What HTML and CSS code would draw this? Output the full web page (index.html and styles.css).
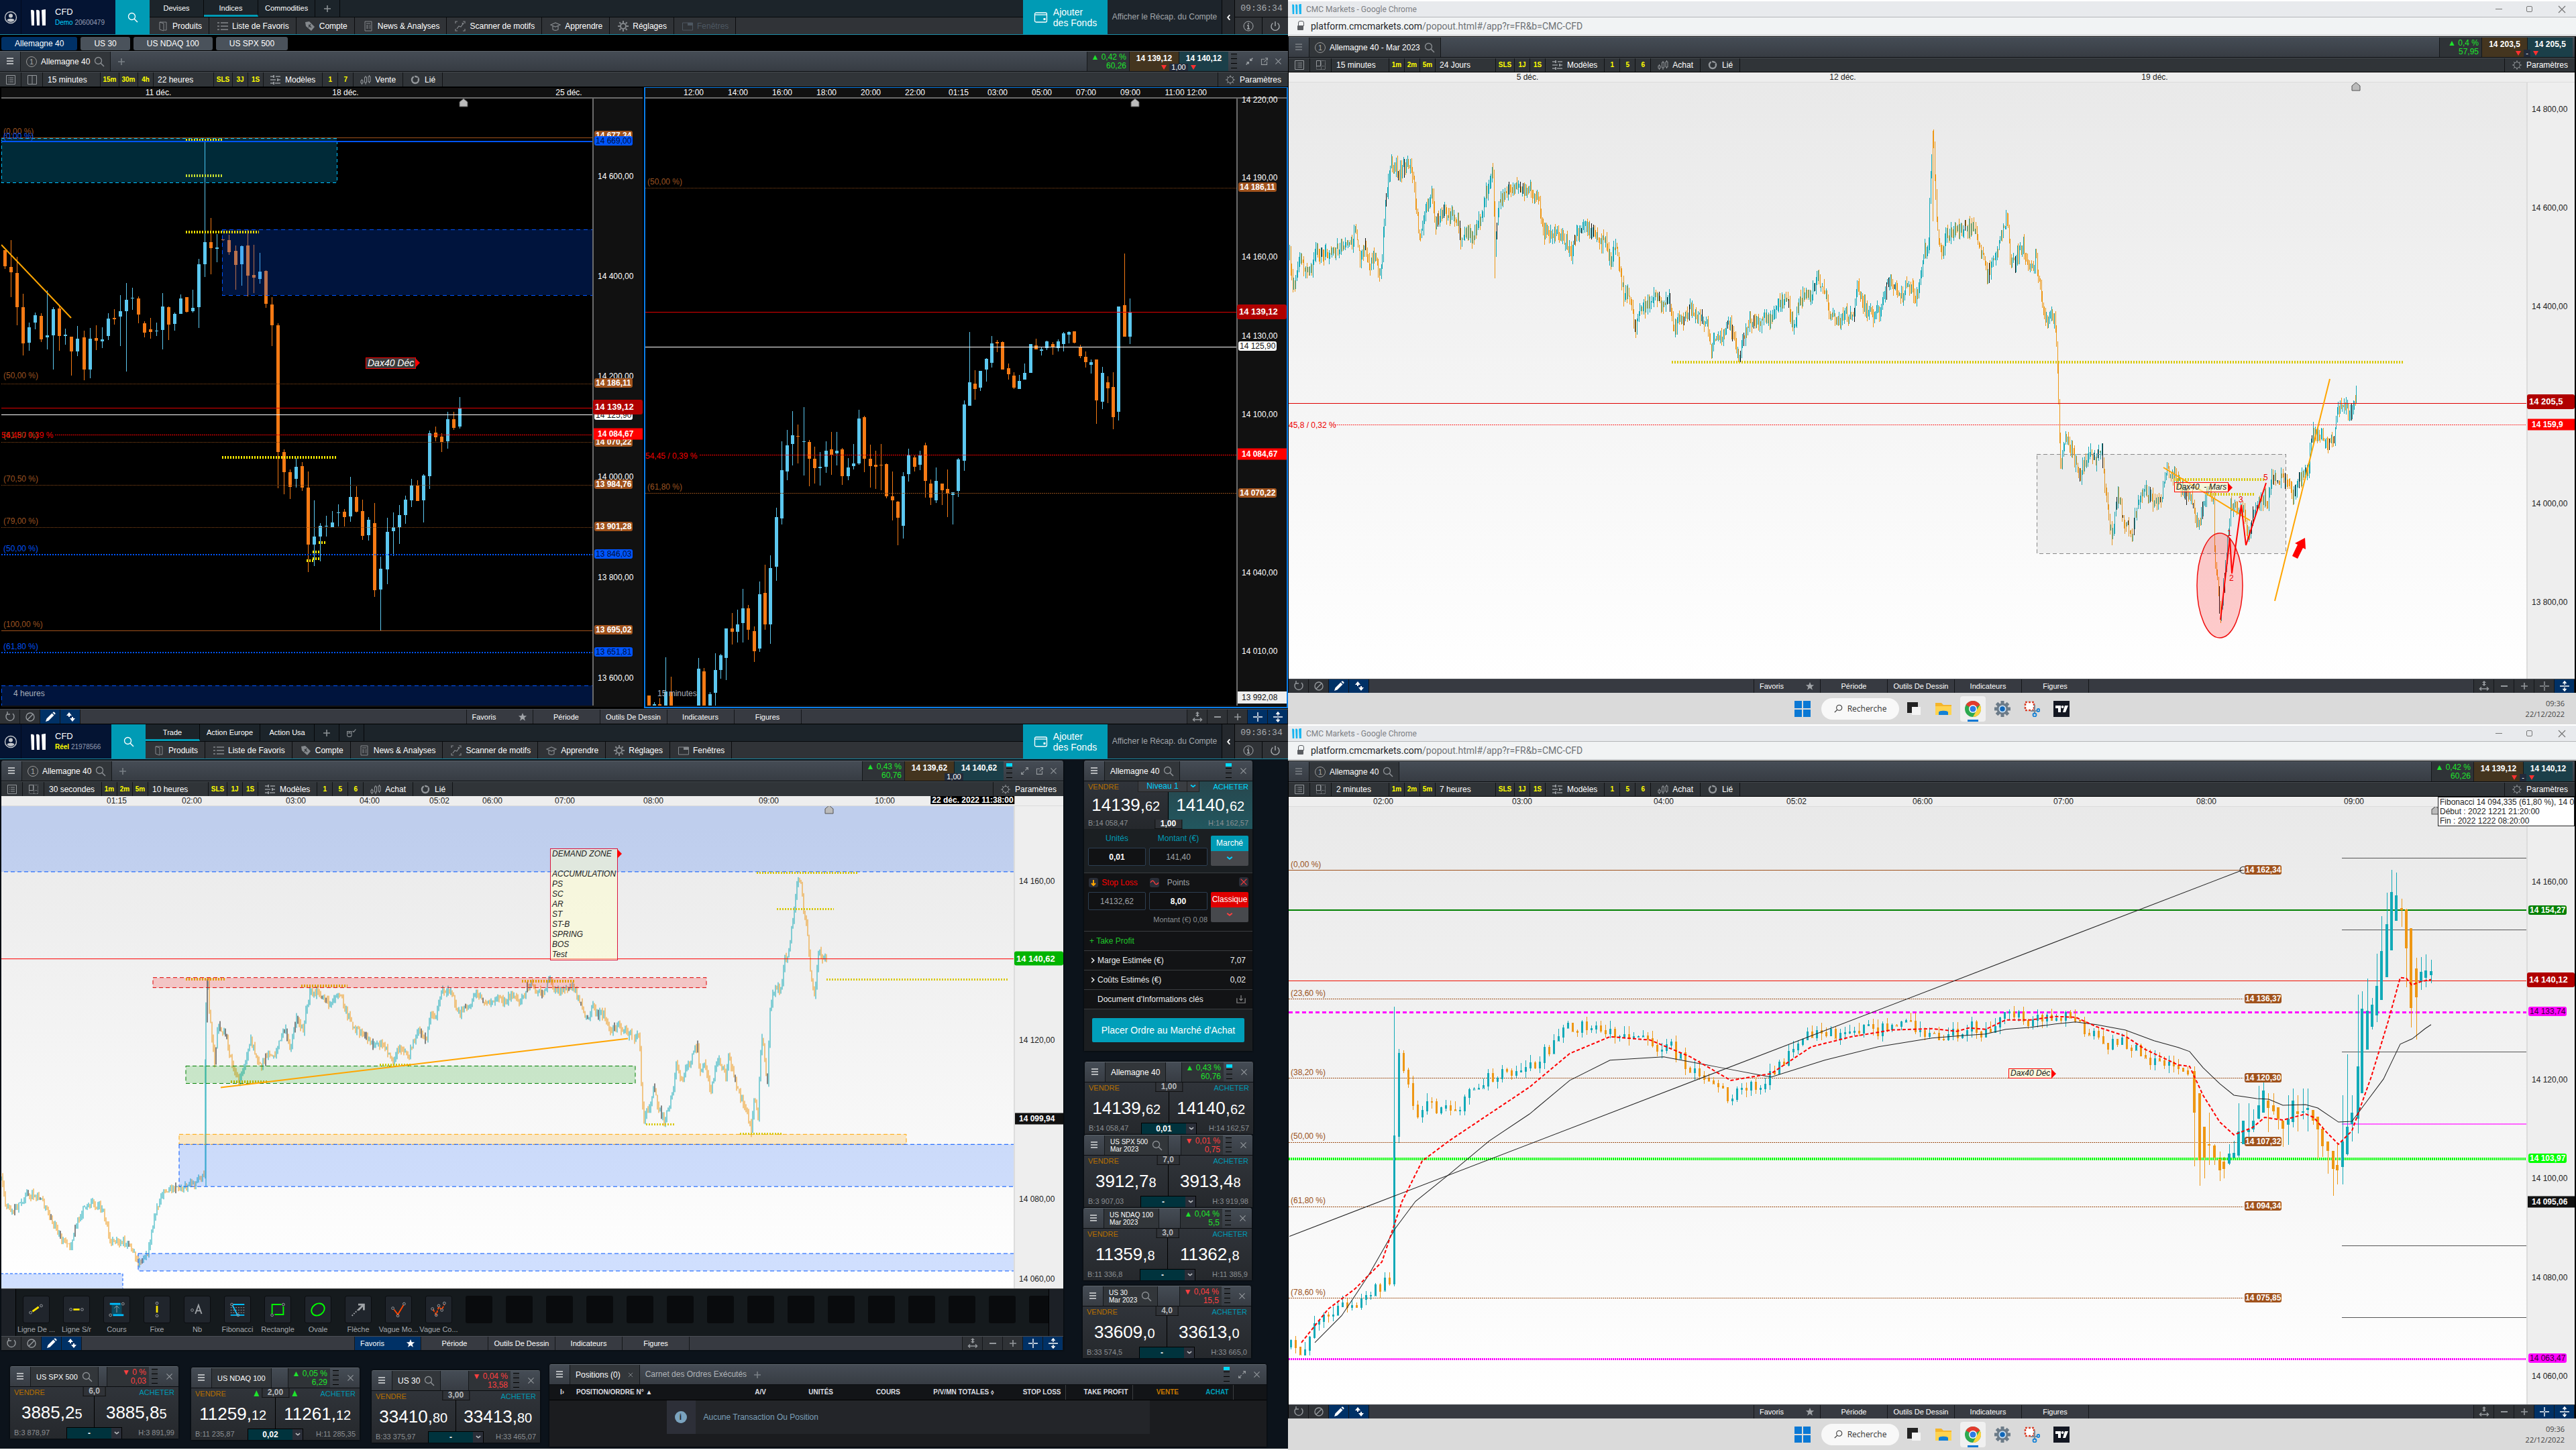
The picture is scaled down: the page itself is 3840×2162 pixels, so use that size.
FILE: index.html
```html
<!DOCTYPE html>
<html lang="fr">
<head>
<meta charset="utf-8">
<title>CMC Markets – Bureau de trading</title>
<meta name="viewport" content="width=device-width, initial-scale=1">
<link rel="stylesheet" href="styles.css">
</head>
<body>
<svg class="sprite" aria-hidden="true">
  <symbol id="i-user" viewBox="0 0 20 20"><circle cx="10" cy="10" r="8.5" fill="none" stroke="currentColor" stroke-width="1.4"/><circle cx="10" cy="7.5" r="3" fill="currentColor"/><path d="M4.5 14c1-3 10-3 11 0c-2.500 3.600-8.500 3.600-11 0z" fill="currentColor"/></symbol>
  <symbol id="i-logo" viewBox="0 0 22 24"><path d="M0 1c3-1 5 0 5 3v20h-4z" fill="currentColor"/><path d="M8 1c3-1 5 0 5 3v20h-4z" fill="currentColor"/><path d="M16 1c3-1 5-1 6-1v24h-5z" fill="currentColor"/></symbol>
  <symbol id="i-search" viewBox="0 0 16 16"><circle cx="6.500" cy="6.500" r="5" fill="none" stroke="currentColor" stroke-width="1.300"/><path d="M10 10l5 5" stroke="currentColor" stroke-width="1.500"/></symbol>
  <symbol id="i-products" viewBox="0 0 16 16"><path d="M3 2h10v12h-3M3 2l6 2v11l-6-2z" fill="none" stroke="currentColor"/></symbol>
  <symbol id="i-list" viewBox="0 0 16 16"><path d="M5 3h11M5 8h11M5 13h11M0 3h3M0 8h3M0 13h3" stroke="currentColor" stroke-width="1.500"/></symbol>
  <symbol id="i-tag" viewBox="0 0 16 16"><path d="M1 2l6-1l8 8l-5 6l-8-7z" fill="currentColor"/><path d="M6 6l4 4M9 5l-3 5" stroke="#2f3338" stroke-width="1.300"/></symbol>
  <symbol id="i-news" viewBox="0 0 16 16"><path d="M3 1h10v14h-10zM5 4h6M5 7h3M5 9h3M5 11h3M9.500 7h2M9.500 9h2M9.500 11h2" fill="none" stroke="currentColor"/></symbol>
  <symbol id="i-scan" viewBox="0 0 16 16"><path d="M1 4v-3h3M12 1h3v3M15 12v3h-3M4 15h-3v-3M3 12l3-4l3 1l4-6" fill="none" stroke="currentColor" stroke-width="1.200"/><path d="M10 3h3v3z" fill="currentColor"/></symbol>
  <symbol id="i-cap" viewBox="0 0 16 16"><path d="M1 6l7-3l7 3l-7 3zM4 8v5c3 2 5 2 8 0v-5" fill="none" stroke="currentColor" stroke-width="1.200"/></symbol>
  <symbol id="i-gear" viewBox="0 0 16 16"><circle cx="8" cy="8" r="4" fill="none" stroke="currentColor" stroke-width="2"/><path d="M8 0v3M8 13v3M0 8h3M13 8h3M2.300 2.300l2 2M11.700 11.700l2 2M13.700 2.300l-2 2M4.300 11.700l-2 2" stroke="currentColor" stroke-width="2"/></symbol>
  <symbol id="i-gearline" viewBox="0 0 16 16"><circle cx="8" cy="8" r="4.500" fill="none" stroke="currentColor"/><path d="M8 1v3M8 12v3M1 8h3M12 8h3M3 3l2 2M11 11l2 2M13 3l-2 2M5 11l-2 2" stroke="currentColor"/></symbol>
  <symbol id="i-window" viewBox="0 0 16 16"><path d="M.5 3h15v11h-15z" fill="none" stroke="currentColor"/><path d="M8 3h8v4h-8z" fill="currentColor"/></symbol>
  <symbol id="i-wallet" viewBox="0 0 20 16"><rect x="1" y="1" width="18" height="14" rx="2" fill="none" stroke="currentColor" stroke-width="1.300"/><path d="M1 4h18" stroke="currentColor" stroke-width="1.300"/><rect x="14" y="9" width="3" height="3" fill="currentColor"/></symbol>
  <symbol id="i-info" viewBox="0 0 16 16"><circle cx="8" cy="8" r="7" fill="none" stroke="currentColor"/><path d="M8 3.500v1.700M6 7h2v4.500M6 12h4" stroke="currentColor" stroke-width="1.500" fill="none"/></symbol>
  <symbol id="i-power" viewBox="0 0 16 16"><path d="M8 1v7M4.500 3.500a6 6 0 1 0 7 0" fill="none" stroke="currentColor" stroke-width="1.400"/></symbol>
  <symbol id="i-doc" viewBox="0 0 16 16"><path d="M1.500 1.500h13v13h-13zM6 5h6M6 8h6M6 11h6M4 5h1M4 8h1M4 11h1" fill="none" stroke="currentColor"/></symbol>
  <symbol id="i-cols" viewBox="0 0 16 16"><path d="M1.500 1.500h13v13h-13zM8 1v14" fill="none" stroke="currentColor"/></symbol>
  <symbol id="i-grid" viewBox="0 0 16 16"><path d="M1.500 1.500h6v8h-6z" fill="none" stroke="currentColor"/><path d="M8 1.500h6.500v13h-13v-5h13M8.500 1v14" fill="none" stroke="currentColor" stroke-dasharray="1 1"/></symbol>
  <symbol id="i-sliders" viewBox="0 0 16 16"><path d="M0 3h5M8 3h7M0 8h8M11 8h4M0 13h4M7 13h8" stroke="currentColor" stroke-width="1.300"/><path d="M5 1v4M11 6v4M5 11v4" stroke="currentColor" stroke-width="2"/></symbol>
  <symbol id="i-candles" viewBox="0 0 16 16"><path d="M1 9h3v4h-3zM6.500 4h3v8h-3zM12 3h3v8h-3zM2.500 7v2M2.500 13v2M8 2v2M8 12v3M13.500 1v2M13.500 11v2" fill="none" stroke="currentColor"/></symbol>
  <symbol id="i-link" viewBox="0 0 16 16"><circle cx="8" cy="8" r="5" fill="none" stroke="currentColor" stroke-width="2.400"/><path d="M6 2l2 6l4-3" fill="none" stroke="#303438" stroke-width="1.500"/></symbol>
  <symbol id="i-reload" viewBox="0 0 16 16"><path d="M4 3a6 6 0 1 0 8 0M4 0v4h4" fill="none" stroke="currentColor" stroke-width="1.400"/></symbol>
  <symbol id="i-ban" viewBox="0 0 16 16"><circle cx="8" cy="8" r="6" fill="none" stroke="currentColor" stroke-width="1.400"/><path d="M4 12l8-8" stroke="currentColor" stroke-width="1.400"/></symbol>
  <symbol id="i-pencil" viewBox="0 0 16 16"><path d="M1 15l1.500-4.500l8-8l3 3l-8 8zM11.500 1.500l1-1c1-.5 3.500 1.500 3 3l-1 1z" fill="currentColor"/></symbol>
  <symbol id="i-updown" viewBox="0 0 16 16"><path d="M2 6l4-5l4 5zM7 10h8l-4 5z" fill="currentColor"/><path d="M6 6v2M11 8v2" stroke="currentColor" stroke-width="2"/></symbol>
  <symbol id="i-star" viewBox="0 0 16 16"><path d="M8 1l2 5h5l-4 3.300l1.500 5.200l-4.500-3l-4.500 3l1.500-5.200l-4-3.300h5z" fill="currentColor"/></symbol>
  <symbol id="i-fit" viewBox="0 0 16 16"><path d="M8 0l3 3h-2v2h2l-3 3l-3-3h2v-2h-2z" fill="currentColor"/><path d="M2 12h12M4 9.500l-2.500 2.500l2.500 2.500M12 9.500l2.500 2.500l-2.500 2.500" fill="none" stroke="currentColor" stroke-width="1.500"/></symbol>
  <symbol id="i-minus" viewBox="0 0 16 16"><path d="M3 8h10" stroke="currentColor" stroke-width="2"/></symbol>
  <symbol id="i-plus" viewBox="0 0 16 16"><path d="M3 8h10M8 3v10" stroke="currentColor" stroke-width="1.600"/></symbol>
  <symbol id="i-cross" viewBox="0 0 16 16"><path d="M1 8h6M9 8h6M8 1v6M8 9v6M8 7.500v1" stroke="currentColor" stroke-width="1.400"/></symbol>
  <symbol id="i-vfit" viewBox="0 0 16 16"><path d="M1 8h14" stroke="currentColor" stroke-width="1.500"/><path d="M8 1v5M8 10v5M5.500 4l2.500-3l2.500 3M5.500 12l2.500 3l2.500-3" fill="none" stroke="currentColor" stroke-width="1.500"/></symbol>
  <symbol id="i-close" viewBox="0 0 16 16"><path d="M3 3l10 10M13 3l-10 10" stroke="currentColor" stroke-width="1.300"/></symbol>
  <symbol id="i-popout" viewBox="0 0 16 16"><path d="M9 4h-6v10h10v-6M8 9l6-6M10 2h4v4" fill="none" stroke="currentColor" stroke-width="1.300"/></symbol>
  <symbol id="i-expand" viewBox="0 0 16 16"><path d="M9 7l5-5M10 2h4v4M7 9l-5 5M2 10v4h4" fill="none" stroke="currentColor" stroke-width="1.400"/></symbol>
  <symbol id="i-shrink" viewBox="0 0 16 16"><path d="M14 2l-4 4M9.500 3v3.500h3.500M2 14l4-4M3 9.500h3.500v3.500" fill="none" stroke="currentColor" stroke-width="1.800"/></symbol>
  <symbol id="i-chev" viewBox="0 0 16 16"><path d="M3 5l5 4l5-4" fill="none" stroke="currentColor" stroke-width="2.600"/></symbol>
  <symbol id="i-left" viewBox="0 0 16 16"><path d="M11 3l-4 5l4 5" fill="none" stroke="currentColor" stroke-width="2.600"/></symbol>
  <symbol id="i-right" viewBox="0 0 16 16"><path d="M6 4l4 4l-4 4" fill="none" stroke="currentColor" stroke-width="1.800"/></symbol>
  <symbol id="i-mouse" viewBox="0 0 20 16"><path d="M2 5h8v7c0 4-8 4-8 0zM2 8h8M6 5v3M12 4l2 2l4-5" fill="none" stroke="currentColor" stroke-width="1.300"/></symbol>
  <symbol id="i-download" viewBox="0 0 16 16"><path d="M1 6v8h14v-8M8 1v8M5 7l3 3l3-3" fill="none" stroke="currentColor" stroke-width="1.400"/></symbol>
  <symbol id="i-down" viewBox="0 0 14 14"><path d="M7 3v8M4 8l3 3l3-3" fill="none" stroke="currentColor" stroke-width="2"/></symbol>
  <symbol id="i-wave" viewBox="0 0 14 14"><path d="M1 7c3-5 5-2 6 0c1 3 3 4 6 0" fill="none" stroke="currentColor" stroke-width="1.300"/></symbol>
  <symbol id="i-win" viewBox="0 0 24 24"><path d="M0 0h11v11h-11zM13 0h11v11h-11zM0 13h11v11h-11zM13 13h11v11h-11z" fill="#0a78d4"/></symbol>
  <symbol id="i-task" viewBox="0 0 24 24"><path d="M2 2h16v16h-16z" fill="#222"/><path d="M9 9h13v12h-13z" fill="#f4f4f4"/></symbol>
  <symbol id="i-folder" viewBox="0 0 24 24"><path d="M0 3h9l3 3h12v15h-24z" fill="#f5b52a"/><path d="M0 8h24v13h-24z" fill="#ffd34f"/><path d="M5 21v-4c0-3 14-3 14 0v4z" fill="#1481d6"/></symbol>
  <symbol id="i-chrome" viewBox="0 0 24 24"><circle cx="12" cy="12" r="12" fill="#2da94f"/><path d="M12 12L1.600 6a12 12 0 0 1 20.800 0z" fill="#e33b2e"/><path d="M12 24l5-9l5.400-9a12 12 0 0 1-10.400 18z" fill="#fdd23f"/><path d="M12 6h10.400l-2.400-3z" fill="#e33b2e"/><circle cx="12" cy="12" r="6" fill="#fff"/><circle cx="12" cy="12" r="4.600" fill="#2c7be5"/></symbol>
  <symbol id="i-cog" viewBox="0 0 24 24"><path d="M12 0v24M0 12h24M3.500 3.500l17 17M20.500 3.500l-17 17" stroke="#6c7b88" stroke-width="5"/><circle cx="12" cy="12" r="8.500" fill="#6c7b88"/><circle cx="12" cy="12" r="5.500" fill="#cfe3f5"/><circle cx="12" cy="12" r="3.800" fill="#0f66b8"/></symbol>
  <symbol id="i-snip" viewBox="0 0 24 24"><rect x="2" y="2" width="13" height="12" fill="#fff" stroke="#d9412b" stroke-width="2.500" stroke-dasharray="3 2"/><path d="M16 6v13M10 15h10" stroke="#7d8b98" stroke-width="2"/><circle cx="16" cy="21" r="2.500" fill="none" stroke="#1481d6" stroke-width="1.800"/><circle cx="21.500" cy="14" r="2" fill="none" stroke="#1481d6" stroke-width="1.800"/></symbol>
  <symbol id="i-tv" viewBox="0 0 24 24"><path d="M0 0h24v24h-24z" fill="#131722"/><path d="M3 7h8v10h-4v-6h-4zM17 7h5l-4 10h-4z" fill="#fff"/><circle cx="13.500" cy="9" r="2" fill="#fff"/></symbol>
</svg>

<div class="desktop">

<!-- Poste 1 : compte démo -->
<section class="screen screen--dark">
  <header class="appbar">
    <button class="appbar__user" aria-label="Profil"><svg><use href="#i-user"/></svg></button>
    <div class="appbar__brand appbar__brand--demo"><svg><use href="#i-logo"/></svg><p><b>CFD</b><span><i class="cyan">Demo</i> 20600479</span></p></div>
    <button class="appbar__search" aria-label="Rechercher"><svg><use href="#i-search"/></svg></button>
    <div class="appbar__menus">
      <nav class="spaces"><a href="#devises">Devises</a><a href="#indices" class="is-on">Indices</a><a href="#commodities">Commodities</a><button class="spaces__add" aria-label="Ajouter"><svg><use href="#i-plus"/></svg></button></nav>
      <nav class="menu"><a href="#produits"><svg><use href="#i-products"/></svg>Produits</a><a href="#favoris"><svg><use href="#i-list"/></svg>Liste de Favoris</a><a href="#compte"><svg><use href="#i-tag"/></svg>Compte</a><a href="#news"><svg><use href="#i-news"/></svg>News &amp; Analyses</a><a href="#scanner"><svg><use href="#i-scan"/></svg>Scanner de motifs</a><a href="#apprendre"><svg><use href="#i-cap"/></svg>Apprendre</a><a href="#reglages"><svg><use href="#i-gear"/></svg>Réglages</a><a href="#fenetres" class="is-off"><svg><use href="#i-window"/></svg>Fenêtres</a></nav>
    </div>
    <button class="appbar__funds"><svg><use href="#i-wallet"/></svg><span>Ajouter<br>des Fonds</span></button>
    <a class="appbar__recap" href="#recap">Afficher le Récap. du Compte</a>
    <button class="appbar__fold" aria-label="Déplier"><svg><use href="#i-left"/></svg></button>
    <div class="appbar__tools"><time>09:36:34</time><button aria-label="Informations"><svg><use href="#i-info"/></svg></button><button aria-label="Déconnexion"><svg><use href="#i-power"/></svg></button></div>
  </header>
  <nav class="subtabs"><button class="is-on">Allemagne 40</button><button>US 30</button><button>US NDAQ 100</button><button>US SPX 500</button></nav>
  <div class="title">
    <button class="title__menu" aria-label="Menu"></button>
    <div class="title__tab"><i class="num">1</i>Allemagne 40<svg><use href="#i-search"/></svg></div>
    <button class="title__add" aria-label="Ajouter un onglet"><svg><use href="#i-plus"/></svg></button>
    <div class="title__change up"><span>▲ 0,42 %</span><span>60,26</span></div>
    <div class="title__quotes"><button class="sell">14 139,12</button><button class="buy">14 140,12</button><span class="spread spread--down">1,00</span></div>
    <i class="meter"></i>
    <div class="title__ctl"><svg><use href="#i-shrink"/></svg><svg><use href="#i-popout"/></svg><svg><use href="#i-close"/></svg></div>
  </div>
  <div class="tools">
    <button class="tools__icon" aria-label="Liste"><svg><use href="#i-doc"/></svg></button><button class="tools__icon" aria-label="Disposition"><svg><use href="#i-cols"/></svg></button>
    <button class="tools__period">15 minutes</button><button class="quick quick--w">15m</button><button class="quick quick--w">30m</button><button class="quick">4h</button>
    <button class="tools__range">22 heures</button><button class="quick quick--w">SLS</button><button class="quick">3J</button><button class="quick">1S</button>
    <button class="tools__item"><svg><use href="#i-sliders"/></svg>Modèles</button><button class="quick">1</button><button class="quick">7</button>
    <button class="tools__item"><svg><use href="#i-candles"/></svg>Vente</button><button class="tools__item"><svg><use href="#i-link"/></svg>Lié</button>
    <button class="tools__item tools__item--end"><svg><use href="#i-gearline"/></svg>Paramètres</button>
  </div>
  <div class="pair">
    <div class="chart chart--dark" data-chart="h4"></div>
    <div class="chart chart--dark chart--focus" data-chart="m15"></div>
  </div>
  <div class="dock">
    <button aria-label="Réinitialiser"><svg><use href="#i-reload"/></svg></button><button aria-label="Effacer"><svg><use href="#i-ban"/></svg></button><button class="is-on" aria-label="Dessiner"><svg><use href="#i-pencil"/></svg></button><button class="is-on" aria-label="Ajuster"><svg><use href="#i-updown"/></svg></button>
    <nav class="dock__menus"><button class="dock__fav">Favoris<svg><use href="#i-star"/></svg></button><button>Période</button><button>Outils De Dessin</button><button>Indicateurs</button><button>Figures</button></nav>
    <button aria-label="Cadrer"><svg><use href="#i-fit"/></svg></button><button aria-label="Réduire"><svg><use href="#i-minus"/></svg></button><button aria-label="Agrandir"><svg><use href="#i-plus"/></svg></button><button class="is-on" aria-label="Curseur"><svg><use href="#i-cross"/></svg></button><button class="is-on" aria-label="Échelle"><svg><use href="#i-vfit"/></svg></button>
  </div>
</section>

<!-- Poste 2 : Dax mars 2023 -->
<section class="screen screen--chrome">
  <div class="chrome__title"><svg class="chrome__logo"><use href="#i-logo"/></svg><span>CMC Markets - Google Chrome</span><i class="chrome__min"></i><i class="chrome__max"></i><svg class="chrome__x"><use href="#i-close"/></svg></div>
  <div class="chrome__url"><i class="lock"></i><span>platform.cmcmarkets.com<em>/popout.html#/app?r=FR&amp;b=CMC-CFD</em></span></div>
  <div class="popout">
    <div class="title">
      <button class="title__menu title__menu--dim" aria-label="Menu"></button>
      <div class="title__tab"><i class="num">1</i>Allemagne 40 - Mar 2023<svg><use href="#i-search"/></svg></div>
      <i class="title__gap"></i>
      <div class="title__change up"><span>▲ 0,4 %</span><span>57,95</span></div>
      <div class="title__quotes title__quotes--s"><button class="sell">14 203,5</button><button class="buy">14 205,5</button><span class="spread spread--down spread--nil">-</span></div>
    </div>
    <div class="tools">
      <button class="tools__icon" aria-label="Liste"><svg><use href="#i-doc"/></svg></button><button class="tools__icon" aria-label="Disposition"><svg><use href="#i-grid"/></svg></button>
      <button class="tools__period">15 minutes</button><button class="quick">1m</button><button class="quick">2m</button><button class="quick">5m</button>
      <button class="tools__range">24 Jours</button><button class="quick quick--w">SLS</button><button class="quick">1J</button><button class="quick">1S</button>
      <button class="tools__item"><svg><use href="#i-sliders"/></svg>Modèles</button><button class="quick">1</button><button class="quick">5</button><button class="quick">6</button>
      <button class="tools__item"><svg><use href="#i-candles"/></svg>Achat</button><button class="tools__item"><svg><use href="#i-link"/></svg>Lié</button>
      <button class="tools__item tools__item--end"><svg><use href="#i-gearline"/></svg>Paramètres</button>
    </div>
    <div class="chart" data-chart="mars"></div>
    <div class="dock">
      <button aria-label="Réinitialiser"><svg><use href="#i-reload"/></svg></button><button aria-label="Effacer"><svg><use href="#i-ban"/></svg></button><button class="is-on" aria-label="Dessiner"><svg><use href="#i-pencil"/></svg></button><button class="is-on" aria-label="Ajuster"><svg><use href="#i-updown"/></svg></button>
      <nav class="dock__menus"><button class="dock__fav">Favoris<svg><use href="#i-star"/></svg></button><button>Période</button><button>Outils De Dessin</button><button>Indicateurs</button><button>Figures</button></nav>
      <button aria-label="Cadrer"><svg><use href="#i-fit"/></svg></button><button aria-label="Réduire"><svg><use href="#i-minus"/></svg></button><button aria-label="Agrandir"><svg><use href="#i-plus"/></svg></button><button aria-label="Curseur"><svg><use href="#i-cross"/></svg></button><button class="is-on" aria-label="Échelle"><svg><use href="#i-vfit"/></svg></button>
    </div>
  </div>
  <footer class="taskbar">
    <button aria-label="Démarrer"><svg><use href="#i-win"/></svg></button><button class="taskbar__search"><svg><use href="#i-search"/></svg>Recherche</button><button aria-label="Vue des tâches"><svg><use href="#i-task"/></svg></button><button aria-label="Explorateur"><svg><use href="#i-folder"/></svg></button><button class="is-on" aria-label="Chrome"><svg><use href="#i-chrome"/></svg></button><button aria-label="Réglages"><svg><use href="#i-cog"/></svg></button><button aria-label="Capture"><svg><use href="#i-snip"/></svg></button><button aria-label="TradingView"><svg><use href="#i-tv"/></svg></button>
    <p class="taskbar__clock">09:36<br>22/12/2022</p>
  </footer>
</section>

<!-- Poste 3 : compte réel -->
<section class="screen screen--work">
  <header class="appbar">
    <button class="appbar__user" aria-label="Profil"><svg><use href="#i-user"/></svg></button>
    <div class="appbar__brand"><svg><use href="#i-logo"/></svg><p><b>CFD</b><span><i class="yellow">Réel</i> 21978566</span></p></div>
    <button class="appbar__search" aria-label="Rechercher"><svg><use href="#i-search"/></svg></button>
    <div class="appbar__menus">
      <nav class="spaces"><a href="#trade" class="is-on">Trade</a><a href="#europe">Action Europe</a><a href="#usa">Action Usa</a><button class="spaces__add" aria-label="Ajouter"><svg><use href="#i-plus"/></svg></button><button class="spaces__add" aria-label="Souris"><svg><use href="#i-mouse"/></svg></button></nav>
      <nav class="menu"><a href="#produits2"><svg><use href="#i-products"/></svg>Produits</a><a href="#favoris2"><svg><use href="#i-list"/></svg>Liste de Favoris</a><a href="#compte2"><svg><use href="#i-tag"/></svg>Compte</a><a href="#news2"><svg><use href="#i-news"/></svg>News &amp; Analyses</a><a href="#scanner2"><svg><use href="#i-scan"/></svg>Scanner de motifs</a><a href="#apprendre2"><svg><use href="#i-cap"/></svg>Apprendre</a><a href="#reglages2"><svg><use href="#i-gear"/></svg>Réglages</a><a href="#fenetres2"><svg><use href="#i-window"/></svg>Fenêtres</a></nav>
    </div>
    <button class="appbar__funds"><svg><use href="#i-wallet"/></svg><span>Ajouter<br>des Fonds</span></button>
    <a class="appbar__recap" href="#recap2">Afficher le Récap. du Compte</a>
    <button class="appbar__fold" aria-label="Déplier"><svg><use href="#i-left"/></svg></button>
    <div class="appbar__tools"><time>09:36:34</time><button aria-label="Informations"><svg><use href="#i-info"/></svg></button><button aria-label="Déconnexion"><svg><use href="#i-power"/></svg></button></div>
  </header>
  <div class="workspace">
    <section class="win win--chart">
      <div class="title">
        <button class="title__menu" aria-label="Menu"></button>
        <div class="title__tab"><i class="num">1</i>Allemagne 40<svg><use href="#i-search"/></svg></div>
        <button class="title__add" aria-label="Ajouter un onglet"><svg><use href="#i-plus"/></svg></button>
        <div class="title__change up"><span>▲ 0,43 %</span><span>60,76</span></div>
        <div class="title__quotes"><button class="sell">14 139,62</button><button class="buy">14 140,62</button><span class="spread">1,00</span></div>
        <i class="meter meter--one"></i>
        <div class="title__ctl"><svg><use href="#i-expand"/></svg><svg><use href="#i-popout"/></svg><svg><use href="#i-close"/></svg></div>
      </div>
      <div class="tools">
        <button class="tools__icon" aria-label="Liste"><svg><use href="#i-doc"/></svg></button><button class="tools__icon" aria-label="Disposition"><svg><use href="#i-grid"/></svg></button>
        <button class="tools__period">30 secondes</button><button class="quick">1m</button><button class="quick">2m</button><button class="quick">5m</button>
        <button class="tools__range">10 heures</button><button class="quick quick--w">SLS</button><button class="quick">1J</button><button class="quick">1S</button>
        <button class="tools__item"><svg><use href="#i-sliders"/></svg>Modèles</button><button class="quick">1</button><button class="quick">5</button><button class="quick">6</button>
        <button class="tools__item"><svg><use href="#i-candles"/></svg>Achat</button><button class="tools__item"><svg><use href="#i-link"/></svg>Lié</button>
        <button class="tools__item tools__item--end"><svg><use href="#i-gearline"/></svg>Paramètres</button>
      </div>
      <div class="chart" data-chart="s30"></div>
      <div class="kit">
        <div class="kit__row">
          <button><svg viewBox="0 0 30 30"><path d="M9 18l10-7" stroke="#ffe600" stroke-width="3"/><circle cx="6" cy="20" r="2"/><circle cx="23" cy="9" r="2"/></svg><span>Ligne De ...</span></button>
          <button><svg viewBox="0 0 30 30"><path d="M10 15h10" stroke="#ffe600" stroke-width="3"/><circle cx="6" cy="15" r="2"/><circle cx="24" cy="15" r="2"/></svg><span>Ligne S/r</span></button>
          <button><svg viewBox="0 0 30 30"><path d="M7 7h16v16h-16z" fill="#0d4a5f" stroke="none"/><path d="M4 6h17M9 24h17" stroke="#00bfff" stroke-width="3"/><path d="M15 20v-10M11 13l4-4l4 4"/><circle cx="25" cy="6" r="2"/><circle cx="5" cy="24" r="2"/></svg><span>Cours</span></button>
          <button><svg viewBox="0 0 30 30"><path d="M15 9v11" stroke="#ffe600" stroke-width="3"/><circle cx="15" cy="5" r="2"/><circle cx="15" cy="25" r="2"/></svg><span>Fixe</span></button>
          <button><svg viewBox="0 0 30 30"><circle cx="7" cy="16" r="2"/><path d="M12 22l5-14l5 14M14 17h6" stroke-width="2"/></svg><span>Nb</span></button>
          <button><svg viewBox="0 0 30 30"><path d="M8 7h18M4 24h22M7 8l8 16" stroke="#00bfff" stroke-width="2"/><path d="M4 12h22M4 16h22M4 20h22" stroke-dasharray="2 2"/><circle cx="6" cy="7" r="2"/><circle cx="16" cy="24" r="2"/></svg><span>Fibonacci</span></button>
          <button><svg viewBox="0 0 30 30"><path d="M6 22v-15h15M24 10v13h-14" stroke="#00ff00" stroke-width="2"/><circle cx="24" cy="7" r="2"/><circle cx="6" cy="24" r="2"/></svg><span>Rectangle</span></button>
          <button><svg viewBox="0 0 30 30"><ellipse cx="15" cy="15" rx="11" ry="9" transform="rotate(-35 15 15)" stroke="#00ff00" stroke-width="2"/></svg><span>Ovale</span></button>
          <button><svg viewBox="0 0 30 30"><path d="M5 25l12-12" stroke-width="2" stroke-dasharray="2 2"/><path d="M15 7h9v9M24 7l-9 9" stroke-width="3"/></svg><span>Flèche</span></button>
          <button><svg viewBox="0 0 30 30"><path d="M8 15l6 8l9-15" stroke="#ff4500" stroke-width="2"/><circle cx="6" cy="13" r="2"/><circle cx="14" cy="25" r="2"/><circle cx="24" cy="6" r="2"/></svg><span>Vague Mo...</span></button>
          <button><svg viewBox="0 0 30 30"><path d="M6 15l5 8l4-12l5 4l4-8" stroke="#ff4500" stroke-width="2" stroke-dasharray="4 2"/><circle cx="5" cy="14" r="2"/><circle cx="11" cy="24" r="2"/><circle cx="15" cy="9" r="2"/><circle cx="20" cy="16" r="2"/><circle cx="24" cy="5" r="2"/></svg><span>Vague Co...</span></button>
          <i></i><i></i><i></i><i></i><i></i><i></i><i></i><i></i><i></i><i></i><i></i><i></i><i></i><i></i><i></i>
        </div>
      </div>
      <div class="dock">
        <button aria-label="Réinitialiser"><svg><use href="#i-reload"/></svg></button><button aria-label="Effacer"><svg><use href="#i-ban"/></svg></button><button class="is-on" aria-label="Dessiner"><svg><use href="#i-pencil"/></svg></button><button class="is-on" aria-label="Ajuster"><svg><use href="#i-updown"/></svg></button>
        <nav class="dock__menus"><button class="dock__fav is-on">Favoris<svg><use href="#i-star"/></svg></button><button>Période</button><button>Outils De Dessin</button><button>Indicateurs</button><button>Figures</button></nav>
        <button aria-label="Cadrer"><svg><use href="#i-fit"/></svg></button><button aria-label="Réduire"><svg><use href="#i-minus"/></svg></button><button aria-label="Agrandir"><svg><use href="#i-plus"/></svg></button><button class="is-on" aria-label="Curseur"><svg><use href="#i-cross"/></svg></button><button class="is-on" aria-label="Échelle"><svg><use href="#i-vfit"/></svg></button>
      </div>
    </section>

    <section class="win card ticket">
      <div class="title"><button class="title__menu" aria-label="Menu"></button><div class="title__tab">Allemagne 40<svg><use href="#i-search"/></svg></div><i class="title__gap"></i><i class="meter meter--one"></i><div class="title__ctl"><svg><use href="#i-close"/></svg></div></div>
      <div class="card__body card__body--live">
        <button class="side side--sell"><span>VENDRE</span><strong>14139,<small>62</small></strong><em>B:14 058,47</em></button>
        <button class="side side--buy"><span>ACHETER</span><strong>14140,<small>62</small></strong><em>H:14 162,57</em></button>
        <div class="level"><select aria-label="Niveau de prix"><option>Niveau 1</option></select><svg><use href="#i-chev"/></svg></div>
        <span class="gap gap--low">1,00</span>
      </div>
      <div class="form form--units">
        <label class="teal" for="unites">Unités</label><label class="teal" for="montant">Montant (€)</label>
        <input id="unites" value="0,01"><input id="montant" class="dim" value="141,40">
        <div class="type"><select aria-label="Type d'ordre"><option>Marché</option></select><svg><use href="#i-chev"/></svg></div>
      </div>
      <div class="form form--stop">
        <label class="red" for="stop"><i class="chip chip--amber"><svg><use href="#i-down"/></svg></i>Stop Loss</label><label class="dim" for="points"><i class="chip"><svg><use href="#i-wave"/></svg></i>Points</label><button class="chip chip--x" aria-label="Retirer le stop"><svg><use href="#i-close"/></svg></button>
        <input id="stop" class="dim" value="14132,62"><input id="points" value="8,00">
        <div class="type type--red"><select aria-label="Type de stop"><option>Classique</option></select><svg><use href="#i-chev"/></svg></div>
        <p>Montant (€) 0,08</p>
      </div>
      <button class="line line--profit">+ Take Profit</button>
      <button class="line"><svg><use href="#i-right"/></svg><span>Marge Estimée (€)</span><b>7,07</b></button>
      <button class="line"><svg><use href="#i-right"/></svg><span>Coûts Estimés (€)</span><b>0,02</b></button>
      <a class="line" href="#dic"><i></i><span>Document d'Informations clés</span><svg class="line__dl"><use href="#i-download"/></svg></a>
      <div class="ticket__foot"><button>Placer Ordre au Marché d'Achat</button></div>
    </section>

    <section class="win card card--r1">
      <div class="title"><button class="title__menu" aria-label="Menu"></button><div class="title__tab">Allemagne 40</div><i class="title__gap"></i><div class="title__change up"><span>▲ 0,43 %</span><span>60,76</span></div><i class="meter meter--one"></i><div class="title__ctl"><svg><use href="#i-close"/></svg></div></div>
      <div class="card__body"><button class="side side--sell"><span>VENDRE</span><strong>14139,<small>62</small></strong><em>B:14 058,47</em></button><button class="side side--buy"><span>ACHETER</span><strong>14140,<small>62</small></strong><em>H:14 162,57</em></button><span class="gap">1,00</span><div class="qty"><input aria-label="Quantité" value="0,01"><button aria-label="Choisir"><svg><use href="#i-chev"/></svg></button></div></div>
    </section>
    <section class="win card card--r2">
      <div class="title"><button class="title__menu" aria-label="Menu"></button><div class="title__tab title__tab--two"><span>US SPX 500<br>Mar 2023</span><svg><use href="#i-search"/></svg></div><i class="title__gap"></i><div class="title__change down"><span>▼ 0,01 %</span><span>0,75</span></div><i class="meter"></i><div class="title__ctl"><svg><use href="#i-close"/></svg></div></div>
      <div class="card__body"><button class="side side--sell"><span>VENDRE</span><strong>3912,7<small>8</small></strong><em>B:3 907,03</em></button><button class="side side--buy"><span>ACHETER</span><strong>3913,4<small>8</small></strong><em>H:3 919,98</em></button><span class="gap">7,0</span><div class="qty"><input aria-label="Quantité" value="-"><button aria-label="Choisir"><svg><use href="#i-chev"/></svg></button></div></div>
    </section>
    <section class="win card card--r3">
      <div class="title"><button class="title__menu" aria-label="Menu"></button><div class="title__tab title__tab--two"><span>US NDAQ 100<br>Mar 2023</span></div><i class="title__gap"></i><div class="title__change up"><span>▲ 0,04 %</span><span>5,5</span></div><i class="meter"></i><div class="title__ctl"><svg><use href="#i-close"/></svg></div></div>
      <div class="card__body"><button class="side side--sell"><span>VENDRE</span><strong>11359,<small>8</small></strong><em>B:11 336,8</em></button><button class="side side--buy"><span>ACHETER</span><strong>11362,<small>8</small></strong><em>H:11 385,9</em></button><span class="gap">3,0</span><div class="qty"><input aria-label="Quantité" value="-"><button aria-label="Choisir"><svg><use href="#i-chev"/></svg></button></div></div>
    </section>
    <section class="win card card--r4">
      <div class="title"><button class="title__menu" aria-label="Menu"></button><div class="title__tab title__tab--two"><span>US 30<br>Mar 2023</span><svg><use href="#i-search"/></svg></div><i class="title__gap"></i><div class="title__change down"><span>▼ 0,04 %</span><span>15,5</span></div><i class="meter"></i><div class="title__ctl"><svg><use href="#i-close"/></svg></div></div>
      <div class="card__body"><button class="side side--sell"><span>VENDRE</span><strong>33609,<small>0</small></strong><em>B:33 574,5</em></button><button class="side side--buy"><span>ACHETER</span><strong>33613,<small>0</small></strong><em>H:33 665,0</em></button><span class="gap">4,0</span><div class="qty"><input aria-label="Quantité" value="-"><button aria-label="Choisir"><svg><use href="#i-chev"/></svg></button></div></div>
    </section>

    <section class="win card card--b1">
      <div class="title"><button class="title__menu" aria-label="Menu"></button><div class="title__tab title__tab--one">US SPX 500<svg><use href="#i-search"/></svg></div><i class="title__gap"></i><div class="title__change down"><span>▼ 0 %</span><span>0,03</span></div><i class="meter"></i><div class="title__ctl"><svg><use href="#i-close"/></svg></div></div>
      <div class="card__body"><button class="side side--sell"><span>VENDRE</span><strong>3885,2<small>5</small></strong><em>B:3 878,97</em></button><button class="side side--buy"><span>ACHETER</span><strong>3885,8<small>5</small></strong><em>H:3 891,99</em></button><span class="gap">6,0</span><div class="qty"><input aria-label="Quantité" value="-"><button aria-label="Choisir"><svg><use href="#i-chev"/></svg></button></div></div>
    </section>
    <section class="win card card--b2">
      <div class="title"><button class="title__menu" aria-label="Menu"></button><div class="title__tab title__tab--one">US NDAQ 100</div><i class="title__gap"></i><div class="title__change up"><span>▲ 0,05 %</span><span>6,29</span></div><i class="meter"></i><div class="title__ctl"><svg><use href="#i-close"/></svg></div></div>
      <div class="card__body"><button class="side side--sell"><span>VENDRE</span><strong>11259,<small>12</small></strong><em>B:11 235,87</em></button><button class="side side--buy"><span>ACHETER</span><strong>11261,<small>12</small></strong><em>H:11 285,35</em></button><span class="gap gap--up">2,00</span><div class="qty"><input aria-label="Quantité" value="0,02"><button aria-label="Choisir"><svg><use href="#i-chev"/></svg></button></div></div>
    </section>
    <section class="win card card--b3">
      <div class="title"><button class="title__menu" aria-label="Menu"></button><div class="title__tab">US 30<svg><use href="#i-search"/></svg></div><i class="title__gap"></i><div class="title__change down"><span>▼ 0,04 %</span><span>13,58</span></div><i class="meter"></i><div class="title__ctl"><svg><use href="#i-close"/></svg></div></div>
      <div class="card__body"><button class="side side--sell"><span>VENDRE</span><strong>33410,<small>80</small></strong><em>B:33 375,97</em></button><button class="side side--buy"><span>ACHETER</span><strong>33413,<small>80</small></strong><em>H:33 465,07</em></button><span class="gap">3,00</span><div class="qty"><input aria-label="Quantité" value="-"><button aria-label="Choisir"><svg><use href="#i-chev"/></svg></button></div></div>
    </section>

    <section class="win orders">
      <div class="title"><button class="title__menu" aria-label="Menu"></button><div class="title__tab">Positions (0)<svg class="mini"><use href="#i-close"/></svg></div><a class="orders__tab" href="#carnet">Carnet des Ordres Exécutés</a><button class="title__add" aria-label="Ajouter un onglet"><svg><use href="#i-plus"/></svg></button><i class="meter meter--one"></i><div class="title__ctl title__ctl--wide"><svg><use href="#i-expand"/></svg><svg><use href="#i-close"/></svg></div></div>
      <table><colgroup><col class="c28"><col><col class="c28"><col class="c100"><col class="c100"><col class="c140"><col class="c100"><col class="c100"><col class="c75"><col class="c75"><col class="c50"></colgroup>
        <thead><tr><th>I›</th><th class="lead">POSITION/ORDRE N° ▲</th><th>A/V</th><th>UNITÉS</th><th>COURS</th><th>P/V/MN TOTALES ⬨</th><th class="rule">STOP LOSS</th><th class="rule">TAKE PROFIT</th><th class="amber">VENTE</th><th class="teal rule">ACHAT</th><th></th></tr></thead>
      </table>
      <div class="notice"><i>i</i><p>Aucune Transaction Ou Position</p></div>
    </section>
  </div>
</section>

<!-- Poste 4 : Dax décembre, 2 minutes -->
<section class="screen screen--chrome">
  <div class="chrome__title"><svg class="chrome__logo"><use href="#i-logo"/></svg><span>CMC Markets - Google Chrome</span><i class="chrome__min"></i><i class="chrome__max"></i><svg class="chrome__x"><use href="#i-close"/></svg></div>
  <div class="chrome__url"><i class="lock"></i><span>platform.cmcmarkets.com<em>/popout.html#/app?r=FR&amp;b=CMC-CFD</em></span></div>
  <div class="popout">
    <div class="title">
      <button class="title__menu title__menu--dim" aria-label="Menu"></button>
      <div class="title__tab"><i class="num">1</i>Allemagne 40<svg><use href="#i-search"/></svg></div>
      <i class="title__gap"></i>
      <div class="title__change up"><span>▲ 0,42 %</span><span>60,26</span></div>
      <div class="title__quotes"><button class="sell">14 139,12</button><button class="buy">14 140,12</button><span class="spread spread--down spread--nil">-</span></div>
    </div>
    <div class="tools">
      <button class="tools__icon" aria-label="Liste"><svg><use href="#i-doc"/></svg></button><button class="tools__icon" aria-label="Disposition"><svg><use href="#i-grid"/></svg></button>
      <button class="tools__period">2 minutes</button><button class="quick">1m</button><button class="quick">2m</button><button class="quick">5m</button>
      <button class="tools__range">7 heures</button><button class="quick quick--w">SLS</button><button class="quick">1J</button><button class="quick">1S</button>
      <button class="tools__item"><svg><use href="#i-sliders"/></svg>Modèles</button><button class="quick">1</button><button class="quick">5</button><button class="quick">6</button>
      <button class="tools__item"><svg><use href="#i-candles"/></svg>Achat</button><button class="tools__item"><svg><use href="#i-link"/></svg>Lié</button>
      <button class="tools__item tools__item--end"><svg><use href="#i-gearline"/></svg>Paramètres</button>
    </div>
    <div class="chart" data-chart="m2"></div>
    <div class="dock">
      <button aria-label="Réinitialiser"><svg><use href="#i-reload"/></svg></button><button aria-label="Effacer"><svg><use href="#i-ban"/></svg></button><button class="is-on" aria-label="Dessiner"><svg><use href="#i-pencil"/></svg></button><button class="is-on" aria-label="Ajuster"><svg><use href="#i-updown"/></svg></button>
      <nav class="dock__menus"><button class="dock__fav">Favoris<svg><use href="#i-star"/></svg></button><button>Période</button><button>Outils De Dessin</button><button>Indicateurs</button><button>Figures</button></nav>
      <button aria-label="Cadrer"><svg><use href="#i-fit"/></svg></button><button aria-label="Réduire"><svg><use href="#i-minus"/></svg></button><button aria-label="Agrandir"><svg><use href="#i-plus"/></svg></button><button class="is-on" aria-label="Curseur"><svg><use href="#i-cross"/></svg></button><button class="is-on" aria-label="Échelle"><svg><use href="#i-vfit"/></svg></button>
    </div>
  </div>
  <footer class="taskbar">
    <button aria-label="Démarrer"><svg><use href="#i-win"/></svg></button><button class="taskbar__search"><svg><use href="#i-search"/></svg>Recherche</button><button aria-label="Vue des tâches"><svg><use href="#i-task"/></svg></button><button aria-label="Explorateur"><svg><use href="#i-folder"/></svg></button><button class="is-on" aria-label="Chrome"><svg><use href="#i-chrome"/></svg></button><button aria-label="Réglages"><svg><use href="#i-cog"/></svg></button><button aria-label="Capture"><svg><use href="#i-snip"/></svg></button><button aria-label="TradingView"><svg><use href="#i-tv"/></svg></button>
    <p class="taskbar__clock">09:36<br>22/12/2022</p>
  </footer>
</section>

</div>
<script src="charts.js"></script>
</body>
</html>
```

FILE: styles.css
```css
:root {
  --teal: #009bb5;
  --navy: #041433;
  --blue: #003166;
  --edge: #0b0d10;
}
* { box-sizing: border-box; }
body { margin: 0; background: #fff; font: 12px/16px "Liberation Sans", Arial, sans-serif; color: #fff; }
p { margin: 0; }
i, em { font-style: normal; }
a { color: inherit; text-decoration: none; }
button, input, select { margin: 0; padding: 0; border: 0; background: none; color: inherit; font: inherit; border-radius: 0; }
button { display: flex; align-items: center; justify-content: center; }
svg { width: 16px; height: 16px; flex: none; display: block; }
.sprite { position: absolute; width: 0; height: 0; }
.cyan { color: #00d2ff; }
.yellow { color: #ffff00; font-weight: bold; }
.teal { color: #009bb5; }
.red { color: #f00; }
.amber { color: #c87800; }
.dim { color: #a0a4a8; }
.up { color: #1ee32c; }
.down { color: #ff4040; }

.desktop { display: grid; grid-template-columns: 1fr 1fr; grid-template-rows: 1080fr 1082fr; min-height: 100vh; }
.screen { display: flex; flex-direction: column; min-width: 0; overflow: hidden; }
.screen--dark { background: #000; }
.screen--work { background: #0c131b; border-bottom: 2px solid #fff; }
.screen--chrome { background: #fff; }

/* Barre d'application */
.appbar { display: flex; flex: none; height: 52px; background: #1d242b; border-bottom: 1px solid #1d8ca6; }
.appbar__user { width: 32px; background: var(--navy); border-right: 1px solid #020a1c; color: #c4c7cc; }
.appbar__user svg { width: 20px; height: 20px; }
.appbar__brand { display: flex; align-items: center; gap: 14px; padding: 0 12px 0 14px; width: 134px; background: var(--navy); }
.appbar__brand--demo { width: 140px; }
.appbar__brand svg { width: 22px; height: 24px; }
.appbar__brand p { display: flex; flex-direction: column; line-height: 16px; }
.appbar__brand b { font-weight: normal; font-size: 13px; }
.appbar__brand span { font-size: 10px; color: #969eb4; white-space: nowrap; }
.appbar__search { width: 51px; background: var(--teal); }
.appbar__menus { flex: 1; display: flex; flex-direction: column; min-width: 0; }
.spaces { display: flex; height: 26px; border-bottom: 1px solid #07090b; background: #1c242a; }
.spaces a { min-width: 81px; padding: 0 10px; border-right: 1px solid #06080a; font-size: 11px; line-height: 25px; text-align: center; }
.spaces a.is-on { border-bottom: 3px solid var(--teal); }
.spaces__add { width: 37px; border-right: 1px solid #06080a; color: #8d9296; }
.menu { display: flex; flex: 1; background: #303337; }
.menu a { display: flex; align-items: center; gap: 6px; padding: 0 10px 0 12px; border-right: 1px solid #0b0c0e; white-space: nowrap; }
.menu svg { color: #85898d; }
.menu .is-off, .menu .is-off svg { color: #4d5761; }
.appbar__funds { width: 126px; gap: 8px; background: var(--teal); font-size: 14px; text-align: left; }
.appbar__funds svg { width: 21px; height: 16px; }
.appbar__recap { width: 171px; font-size: 12px; line-height: 51px; text-align: center; color: #a2a7ab; white-space: nowrap; overflow: hidden; border-right: 1px solid #06080a; }
.appbar__fold { width: 18px; background: #24282d; }
.appbar__fold svg { width: 12px; height: 12px; }
.appbar__tools { display: grid; grid-template-columns: 1fr 1fr; grid-template-rows: 26px 25px; width: 80px; background: #303337; border-left: 1px solid #06080a; color: #a9adb1; }
.appbar__tools time { grid-column: span 2; font: 13px/25px "Liberation Mono", "Courier New", monospace; text-align: center; border-bottom: 1px solid #07090b; }
.appbar__tools button + button { border-left: 1px solid #07090b; }

.subtabs { display: flex; flex: none; gap: 5px; height: 24px; padding: 3px 2px 1px; background: #000; }
.subtabs button { padding: 0 20px; background: #4a525b; border-radius: 3px; }
.subtabs .is-on { background: var(--blue); }

/* Barre de titre des fenêtres */
.title { display: flex; flex: none; height: 31px; background: linear-gradient(#454c55, #373c43); border-top: 1px solid #5d646b; border-bottom: 1px solid var(--edge); }
.title__menu { width: 31px; border-right: 1px solid #15181b; background: linear-gradient(#b4b7ba, #b4b7ba) 10px 9px / 10px 2px no-repeat, linear-gradient(#b4b7ba, #b4b7ba) 10px 13px / 10px 2px no-repeat, linear-gradient(#b4b7ba, #b4b7ba) 10px 17px / 10px 2px no-repeat; }
.title__menu--dim { background: linear-gradient(#6d7278, #6d7278) 10px 9px / 10px 2px no-repeat, linear-gradient(#6d7278, #6d7278) 10px 13px / 10px 2px no-repeat, linear-gradient(#6d7278, #6d7278) 10px 17px / 10px 2px no-repeat; }
.title__tab { display: flex; align-items: center; gap: 6px; padding: 0 8px; background: #32363a; border-right: 1px solid #15181b; white-space: nowrap; }
.title__tab svg { color: #8d9195; }
.title__tab .mini { width: 10px; height: 10px; margin-left: 4px; }
.title__tab--one { font-size: 11px; }
.title__tab--two { font-size: 10px; line-height: 11px; }
.num { width: 16px; height: 16px; border: 1px solid #999; border-radius: 50%; color: #aaa; font-size: 11px; line-height: 14px; text-align: center; }
.title__add { width: 32px; color: #7a8086; margin-right: auto; }
.title__gap { flex: 1; }
.title__change { display: flex; flex-direction: column; align-items: flex-end; justify-content: center; width: 63px; padding-right: 4px; background: #2f3337; border-left: 1px solid #15181b; line-height: 13px; white-space: nowrap; }
.title__quotes { position: relative; display: grid; grid-template-columns: 1fr 1fr; width: 148px; font-weight: bold; }
.title__quotes--s { width: 136px; }
.title__quotes button { padding-bottom: 9px; border-left: 1px solid #15181b; white-space: nowrap; }
.sell { background: #44351f; }
.buy { background: #1b3f49; }
.spread { position: absolute; left: 50%; bottom: 0; width: 28px; margin-left: -14px; background: #222a3a; font-size: 11px; line-height: 11px; text-align: center; font-weight: normal; }
.spread--nil { width: 10px; margin-left: -5px; }
.spread--down::before, .spread--down::after { content: ""; position: absolute; top: 2px; border: 4px solid transparent; border-top: 7px solid #ff3030; border-bottom: 0; }
.spread--down::before { right: 100%; margin-right: 4px; }
.spread--down::after { left: 100%; margin-left: 4px; }
.popout .title__quotes { margin-right: 3px; }
.meter { width: 9px; margin: 3px 4px 3px 4px; background: repeating-linear-gradient(#000 0 1px, #3a3f45 1px 7px); }
.meter--one { background: linear-gradient(#00dcff, #00dcff) 0 0 / 9px 5px no-repeat, repeating-linear-gradient(#000 0 1px, #3a3f45 1px 7px); }
.title__ctl { display: flex; align-items: center; justify-content: space-between; width: 72px; padding: 0 8px; color: #969b9f; }
.title__ctl svg { width: 13px; height: 13px; }

/* Barre d'outils du graphique */
.tools { display: flex; flex: none; height: 22px; background: #303438; border-top: 1px solid #454a4f; }
.tools button { flex: none; border-right: 1px solid #111315; white-space: nowrap; }
.tools__icon { width: 32px; color: #94989c; }
.tools .tools__period { width: 86px; justify-content: flex-start; padding-left: 7px; }
.tools .tools__range { width: 90px; justify-content: flex-start; padding-left: 6px; }
.quick { width: 23px; color: #ffff00; font-size: 10px; font-weight: bold; }
.quick--w { width: 28px; }
.tools__item { gap: 6px; padding: 0 10px; }
.tools__item svg { color: #94989c; }
.tools .tools__item--end { margin-left: auto; border-left: 1px solid #111315; border-right: 0; }

/* Graphiques */
.pair { flex: 1; display: grid; grid-template-columns: 1fr 1fr; min-height: 0; margin-top: 1px; }
.chart { --bg: linear-gradient(#e9e9e9, #fff); --axis: #eee; --rule: #dcdcdc; --ink: #222; flex: 1; display: grid; grid-template: 14px 1fr / 1fr 73px; min-height: 0; min-width: 0; color: var(--ink); background: var(--axis); }
.chart--dark { --bg: #000; --axis: #111; --rule: #6b6b6b; --ink: #fff; grid-template: 16px 1fr 2px / 1fr 75px; border: 2px solid #000; border-top-width: 1px; }
.chart--focus { border-color: #0a7de8; }
.chart__times { grid-column: 1 / 3; position: relative; border-bottom: 1px solid var(--rule); }
.chart--dark .chart__times { border-bottom-width: 2px; }
.chart__times span { position: absolute; top: 0; line-height: 14px; white-space: nowrap; transform: translateX(-50%); }
.chart__times .stamp { background: #000; color: #fff; font-weight: bold; line-height: 12px; padding: 0 2px; }
.chart__plot { position: relative; overflow: hidden; background: var(--bg); }
.chart__plot > svg { position: absolute; inset: 0; width: 100%; height: 100%; }
.chart__plot span { position: absolute; transform: translateY(-50%); white-space: pre; line-height: 15px; }
.chart__prices { position: relative; border-left: 2px solid var(--rule); }
.chart__prices span { position: absolute; left: 6px; transform: translateY(-50%); line-height: 14px; white-space: nowrap; }
.chart__prices .tag { left: 1px; padding: 0 2px; border-radius: 3px; }
.chart__prices .full { left: 0; right: 0; padding: 0 6px; line-height: 17px; font-weight: bold; color: #fff; }
.chart__prices .now { left: -1px; right: 0; padding: 0 3px; border-radius: 3px; line-height: 22px; font-size: 13px; font-weight: bold; color: #fff; background: #b00000; }
.chart__prices .box { left: 0; right: 0; padding: 0 6px; background: #eee; color: #111; line-height: 18px; }
.chart__prices .cursor { background: #111; }
.chart__prices .alert { background: #f00; }
.brown { background: #a0521c; color: #fff; }
.chart__prices .brown { font-weight: bold; }
.azure { background: #0055ff; color: #000e38; }
.white { background: #fff; color: #111; }
.green { background: #008000; color: #fff; font-weight: bold; }
.chart__prices .ok { background: #00b400; line-height: 21px; }
.pink { background: #f0f; color: #300030; }
.lime { background: #0f0; color: #fff; font-weight: bold; }
.fib { color: #9a5220; }
.fib--blue { color: #0050f0; }
.ink-red { color: #e00; }
.ghost { color: #aab0ba; }
.chart__plot .mark { padding: 0 1px; font-weight: bold; border-radius: 3px; line-height: 14px; }
.chart__plot .note { transform: none; padding: 0 2px; border: 1px solid #f00; background: rgba(255, 255, 200, .5); color: #222; font-style: italic; line-height: 13px; }
.chart__plot .note--dark { background: #3a3a3a; color: #fff; font-size: 14px; line-height: 15px; }
.chart__plot .note::after { content: ""; position: absolute; left: 100%; top: 0; border: 7px solid transparent; border-left-color: #f00; border-right: 0; }
.chart__plot .note--list { background: rgba(255, 255, 205, .5); line-height: 15px; border-color: #dc143c; }
.chart--tip { position: relative; }
.tip-out { position: absolute; right: 0; top: 0; width: 204px; padding: 0 2px; overflow: hidden; border: 1px solid #222; background: #fff; color: #222; line-height: 14px; white-space: pre; }

/* Barre basse du graphique */
.dock { display: flex; flex: none; height: 22px; background: #373a41; border-top: 1px solid #4a4e54; }
.screen--dark .dock { margin: 1px 0 1px; }
.screen--chrome .dock, .screen--work .dock { height: 21px; }
.dock button { width: 30px; border-right: 1px solid #15171a; background: #2f3236; color: #94989c; }
.dock .is-on { background: var(--blue); color: #fff; }
.dock__menus { flex: 1; display: flex; justify-content: center; border-right: 1px solid #15171a; }
.dock__menus button { width: 100px; color: #fff; background: #373a41; font-size: 11px; }
.dock__menus button:first-child { border-left: 1px solid #15171a; }
.dock__menus .dock__fav { justify-content: space-between; padding: 0 8px; }
.dock__fav svg { color: #a0a3a7; width: 14px; height: 14px; }
.dock__fav.is-on svg { color: #fff; }

/* Fenêtres Chrome */
.chrome__title { display: flex; align-items: center; flex: none; height: 26px; padding: 0 13px 0 6px; border-top: 2px solid #fff; border-bottom: 1px solid #b4b6b9; background: #e8eaed; color: #7d8084; font-family: Roboto, "Open Sans", sans-serif; }
.chrome__logo { width: 14px; height: 15px; margin-right: 7px; color: #14b4f0; }
.chrome__min { width: 10px; margin-left: auto; border-top: 1px solid #777; }
.chrome__max { width: 9px; height: 9px; margin: 0 36px; border: 1px solid #777; border-radius: 2px; }
.chrome__x { color: #777; }
.chrome__url { display: flex; align-items: center; flex: none; height: 27px; padding: 0 14px; border-bottom: 1px solid #b4b6b9; background: #f1f3f4; color: #26282b; font: 14px/18px Roboto, "Open Sans", sans-serif; }
.chrome__url em { color: #6d7175; }
.lock { width: 9px; height: 7px; margin: 4px 11px 0 0; background: #5b5e62; border-radius: 1px; position: relative; }
.lock::before { content: ""; position: absolute; left: 1px; bottom: 6px; width: 7px; height: 6px; border: 1px solid #5b5e62; border-radius: 3px 3px 0 0; }
.popout { display: flex; flex: 1; flex-direction: column; min-height: 0; margin-top: 1px; border: 1px solid #000; border-right-width: 2px; border-bottom: 0; }
.popout .tools { border-bottom: 1px solid #000; }
.popout .chart { grid-template: 15px 1fr / 1fr 72px; }

.taskbar { position: relative; display: flex; flex: none; align-items: center; justify-content: center; height: 47px; background: #dadada; color: #333; font-family: "Open Sans", "Noto Sans", sans-serif; }
.taskbar button { width: 44px; height: 40px; }
.taskbar svg { width: 24px; height: 24px; }
.taskbar .is-on { width: 38px; height: 38px; margin: 0 3px; border-radius: 4px; background: linear-gradient(#0a78d4, #0a78d4) 50% 100% / 16px 3px no-repeat #f0f0f0; }
.taskbar .taskbar__search { gap: 7px; width: 116px; height: 32px; margin: 0 0 0 6px; border-radius: 16px; background: #f8f8f8; font-size: 12px; }
.taskbar .taskbar__search svg { width: 13px; height: 13px; transform: scaleX(-1); }
.taskbar__clock { position: absolute; right: 17px; font-size: 11px; line-height: 16px; text-align: right; color: #444; }

/* Espace de travail */
.workspace { position: relative; flex: 1; }
.win { position: absolute; display: flex; flex-direction: column; border-radius: 3px 3px 0 0; overflow: hidden; box-shadow: 0 0 3px #000; }
.win--chart { left: 2px; right: 335px; top: 2px; bottom: 147px; }
.win--chart .chart { grid-template: 15px 1fr / 1fr 74px; }
.card { width: 251px; background: #1b1e21; }
.card--r1, .card--r2, .card--r3, .card--r4, .card--b1, .card--b2, .card--b3 { height: 108px; }
.ticket { right: 53px; top: 2px; }
.card--r1 { right: 52px; top: 451px; }
.card--r2 { right: 53px; top: 560px; }
.card--r3 { right: 54px; top: 669px; }
.card--r4 { right: 55px; top: 785px; }
.card--b1 { left: 15px; bottom: 15px; }
.card--b2 { left: 285px; bottom: 13px; }
.card--b3 { left: 554px; bottom: 9px; }
.card .title__ctl { width: 27px; padding: 0 7px; }
.card__body { position: relative; flex: 1; display: grid; grid-template-columns: 1fr 1fr; background: linear-gradient(#30343a, #25282c); }
.side { flex-direction: column; justify-content: space-between; align-items: center; padding: 0 6px; }
.side--sell { border-right: 1px solid #000; }
.side span { align-self: flex-start; font-size: 11px; line-height: 17px; color: #b87000; }
.side--buy span { align-self: flex-end; color: #009bb5; }
.side strong { font-weight: normal; font-size: 26px; line-height: 30px; }
.side small { font-size: 20px; }
.side em { align-self: flex-start; font-size: 11px; line-height: 17px; color: #8b8f93; }
.side--buy em { align-self: flex-end; }
.gap { position: absolute; left: 50%; top: 0; min-width: 33px; padding: 0 8px; transform: translateX(-50%); border: 1px solid #111; border-top: 0; background: #303338; color: #b5b8bb; line-height: 13px; text-align: center; font-weight: bold; }
.gap--low { top: auto; bottom: 0; color: #fff; }
.gap--up::before, .gap--up::after { content: ""; position: absolute; top: 3px; border: 4px solid transparent; border-bottom: 9px solid #1ee32c; border-top: 0; }
.gap--up::before { right: 100%; margin-right: 5px; }
.gap--up::after { left: 100%; margin-left: 5px; }
.qty { position: absolute; left: 84px; bottom: 0; display: flex; height: 17px; border: 1px solid #000; border-bottom: 0; }
.qty input { width: 66px; background: #00333d; text-align: center; font-weight: bold; }
.qty button { width: 15px; background: #2a2e38; color: #b5b8bb; }
.qty svg { width: 10px; height: 10px; }

.card__body--live { flex: none; height: 71px; }
.card__body--live .side--buy { background: linear-gradient(#27474e, #22575f); }
.card__body--live .side--buy span { color: #00dcff; }
.level { position: absolute; left: 80px; top: 0; display: flex; align-items: center; width: 92px; height: 16px; background: #3a3d42; color: #00d2ff; border: 1px solid #222; border-top: 0; }
.level select { flex: 1; height: 15px; appearance: none; text-align-last: center; border-right: 1px solid #222; line-height: 15px; }
.level svg { width: 11px; height: 11px; margin: 0 3px; }
.form { display: grid; grid-template-columns: 86px 87px 56px; column-gap: 5px; padding: 0 6px; border-bottom: 1px solid #3a3d40; background: #1b1f22; }
.form label { display: flex; align-items: center; justify-content: center; }
.form input { height: 27px; border: 1px solid #2d3f52; border-radius: 2px; background: #111214; text-align: center; }
.form--units { grid-template-rows: 28px 27px; height: 66px; }
.form--stop { grid-template-rows: 28px 27px 22px; height: 87px; background: #121315; }
.form--stop label { position: relative; padding-left: 8px; }
.form--stop label + label { padding: 0; }
.chip { position: absolute; left: 1px; width: 14px; height: 14px; border-radius: 3px; background: #2a2e38; color: #ff3b3b; }
.chip--amber { color: #ffa500; }
.chip--x { position: static; justify-self: end; align-self: center; margin-bottom: 3px; }
.chip svg { width: 14px; height: 14px; }
.form #unites, .form #points { font-weight: bold; }
.type { position: relative; grid-column: 3; grid-row: 1 / 3; align-self: end; height: 45px; }
.form--stop .type { grid-row: 2 / 4; align-self: start; }
.type select { width: 56px; height: 45px; appearance: none; padding-bottom: 23px; background: linear-gradient(var(--teal) 0 23px, #47494d 23px); text-align-last: center; border-radius: 2px; }
.type--red select { background: linear-gradient(#e00000 0 23px, #47494d 23px); }
.type svg { position: absolute; left: 22px; bottom: 5px; width: 12px; height: 12px; color: #00d2ff; }
.type--red svg { color: #ff4040; }
.form--stop p { grid-column: 1 / 3; grid-row: 3; align-self: end; font-size: 11px; text-align: right; color: #8b8f93; }
.line { display: flex; flex: none; align-items: center; justify-content: flex-start; height: 29px; padding: 0 10px 0 6px; border-bottom: 1px solid #3a3d40; background: #121315; color: #eceeef; }
.line i { width: 14px; }
.line svg { width: 14px; height: 14px; }
.line b { margin-left: auto; font-weight: normal; }
.line .line__dl { margin-left: auto; color: #888; }
.line--profit { padding-left: 8px; color: #1fc42a; }
.ticket__foot { padding: 13px 12px; }
.ticket__foot button { width: 100%; height: 36px; border-radius: 2px; background: #009fba; font-size: 14px; }

/* Outils favoris */
.kit { flex: none; height: 71px; padding: 0 21px; background: #1c2026; border-top: 1px solid #555; }
.kit__row { display: flex; gap: 20px; height: 100%; padding: 10px 10px 0; overflow: hidden; background: #151a1d; border-left: 1px solid #000; border-right: 1px solid #000; }
.kit__row button { display: flex; flex: none; flex-direction: column; justify-content: flex-start; width: 40px; }
.kit__row button svg { width: 40px; height: 41px; padding: 5px; border: 1px solid #0b0d10; border-radius: 3px; background: #20252c; fill: none; stroke: #a0a4a8; stroke-width: 1; }
.kit__row button span { font-size: 11px; line-height: 19px; color: #a5a9ad; white-space: nowrap; }
.kit__row i { flex: none; width: 40px; height: 41px; border-radius: 3px; background: #090b0d; }

/* Positions */
.orders { left: 819px; right: 32px; bottom: 3px; height: 123px; background: #1b1c1f; }
.orders__tab { padding: 0 0 0 8px; line-height: 29px; color: #b0b4b8; }
.title__ctl--wide { width: 51px; }
.orders table { border-collapse: collapse; table-layout: fixed; width: 100%; background: #121417; }
.orders th { height: 22px; padding: 0 6px 0 0; border-bottom: 1px solid #000; color: #dcdfe2; font-size: 10px; font-weight: bold; line-height: 12px; text-align: right; white-space: nowrap; overflow: hidden; }
.orders th.lead { text-align: left; padding-left: 12px; }
.orders th.rule { border-right: 1px solid #3a3d40; }
.orders th.amber { color: #c87800; }
.orders th.teal { color: #00a0bb; }
.c28 { width: 28px; } .c50 { width: 50px; } .c75 { width: 75px; } .c100 { width: 100px; } .c140 { width: 140px; }
.notice { display: flex; align-items: center; width: 720px; height: 50px; margin: 0 auto; background: linear-gradient(90deg, #2d2f38 43px, #232529 43px); color: #7ba0ba; }
.notice i { width: 18px; height: 18px; margin: 0 12px; border-radius: 50%; background: #7ba3bf; color: #232529; font-weight: bold; line-height: 18px; text-align: center; }
.notice p { padding-left: 13px; }
```

FILE: charts.js
```js
/* Draws the five price charts. All coordinates are desktop pixels; each chart has its own viewBox. */
const line = (x1, y1, x2, y2, c, w = 1, dash = '') =>
  `<path d="M${x1} ${y1}L${x2} ${y2}" stroke="${c}" stroke-width="${w}" ${dash ? `stroke-dasharray="${dash}"` : ''} fill="none"/>`;
const poly = (pts, c, w = 1, dash = '') =>
  `<polyline points="${pts}" stroke="${c}" stroke-width="${w}" ${dash ? `stroke-dasharray="${dash}"` : ''} fill="none"/>`;
const zone = (x1, y1, x2, y2, fill, op, c, dash = '6 4', w = 1) =>
  `<rect x="${x1}" y="${y1}" width="${x2 - x1}" height="${y2 - y1}" fill="${fill}" fill-opacity="${op}" stroke="${c}" stroke-width="${w}" stroke-dasharray="${dash}"/>`;
const ticks = (x1, x2, y, c = '#e6d800', w = 5) => line(x1, y, x2, y, c, w, '2 2');
const crisp = s => `<g shape-rendering="crispEdges">${s}</g>`;
const home = (x, y) => `<path d="M${x - 6} ${y + 12}v-7l6-5l6 5v7z" fill="#bbb" stroke="#555"/>`;

/* rows: [index, high, top, bottom, low, 1 = up] */
function candles(rows, x0, dx, w, up, down, ky = 1, y0 = 0) {
  return crisp(rows.map(([i, h, t, b, l, u]) => {
    const x = Math.round(x0 + dx * i), c = u ? up : down;
    const Y = v => Math.round(y0 + v * ky);
    return `<path d="M${x} ${Y(h)}V${Y(l)}" stroke="${c}" stroke-width="1"/><rect x="${x - w / 2}" y="${Y(t)}" width="${w}" height="${Math.max(1, Y(b) - Y(t))}" fill="${c}"/>`;
  }).join(''));
}
/* Dense OHLC bars along a price path. */
function dense(pts, step, amp, seed, w = 1, body = 0) {
  let s = seed, out = { '#12aab8': '', '#ee9714': '', '#111': '' };
  const rnd = () => (s = (s * 16807) % 2147483647) / 2147483647;
  const at = x => {
    let k = 1;
    while (k < pts.length - 1 && pts[k][0] < x) k++;
    const [a, b] = [pts[k - 1], pts[k]];
    return a[1] + (b[1] - a[1]) * Math.min(1, (x - a[0]) / (b[0] - a[0] || 1));
  };
  let prev = at(pts[0][0]);
  for (let x = pts[0][0]; x <= pts[pts.length - 1][0]; x += step) {
    const y = at(x) + (rnd() - .5) * amp;
    const hi = Math.min(y, prev) - rnd() * amp * .7, lo = Math.max(y, prev) + rnd() * amp * .7;
    const c = !body && rnd() < .06 ? '#111' : y < prev ? '#12aab8' : '#ee9714';
    out[c] += `M${Math.round(x)} ${Math.round(hi)}V${Math.round(lo)}`;
    if (body) out[c] += `M${Math.round(x) - 1} ${Math.round(Math.min(y, prev))}V${Math.round(Math.max(y, prev) + 2)}M${Math.round(x) + 1} ${Math.round(Math.min(y, prev))}V${Math.round(Math.max(y, prev) + 2)}`;
    prev = y;
  }
  return crisp(Object.entries(out).map(([c, d]) => `<path d="${d}" stroke="${c}" stroke-width="${w}" fill="none"/>`).join(''));
}

const H4 = [[0,373,373,397,401,0],[1,358,398,406,443,0],[2,383,407,458,485,0],[3,438,458,512,530,0],[4,481,488,511,523,1],[5,466,470,481,491,1],[6,467,471,506,510,0],[7,433,500,503,521,1],[8,458,461,500,551,1],[9,456,460,501,523,0],[10,490,499,501,514,1],[11,502,502,524,560,0],[12,486,505,524,531,1],[13,493,503,551,567,0],[14,489,505,551,564,1],[15,485,504,508,522,0],[16,488,506,509,519,1],[17,467,475,501,507,1],[18,461,474,476,484,0],[19,440,464,472,516,1],[20,422,447,464,554,1],[21,429,444,445,462,1],[22,442,445,469,482,0],[23,479,482,496,503,0],[24,474,491,495,505,0],[25,481,493,494,501,1],[26,437,457,492,521,1],[27,457,458,484,507,0],[28,466,468,483,493,1],[29,439,445,468,468,1],[30,443,443,465,466,0],[31,432,459,464,466,1],[32,386,394,458,489,1],[33,211,361,394,413,1],[34,325,361,370,409,0],[35,349,369,371,391,1],[36,357,357,358,359,0],[37,350,358,376,380,0],[38,366,374,395,432,0],[39,366,367,394,426,1],[40,342,366,411,442,0],[41,365,410,414,437,0],[42,377,405,416,423,1],[43,403,404,453,459,0],[44,443,454,485,516,0],[45,482,485,674,728,0],[46,670,674,704,737,0],[47,700,704,726,744,0],[48,683,696,714,727,1],[49,689,695,727,732,0],[50,703,727,812,853,0],[51,746,800,812,844,1],[52,780,784,800,837,1],[53,769,784,785,800,1],[54,762,779,786,786,1],[55,752,764,765,785,1],[56,759,763,771,785,0],[57,711,741,770,778,1],[58,725,741,763,764,0],[59,745,762,799,805,0],[60,771,775,798,806,1],[61,750,780,880,890,0],[62,830,848,879,940,1],[63,772,793,849,871,1],[64,764,786,792,829,1],[65,753,768,786,811,1],[66,739,745,768,781,1],[67,714,724,746,756,1],[68,716,724,747,747,0],[69,707,709,746,779,1],[70,642,646,710,729,1],[71,636,645,652,658,0],[72,646,651,659,674,0],[73,614,625,658,669,1],[74,614,625,638,641,0],[75,592,608,636,639,1]];
const M15 = [[0,1037,1037,1052,1052,0],[1,1047,1050,1052,1052,1],[2,1041,1050,1052,1052,0],[3,980,1031,1052,1052,1],[4,1009,1032,1052,1052,0],[9,981,997,1052,1052,1],[10,996,1001,1052,1052,0],[11,1032,1035,1052,1052,1],[12,974,999,1033,1052,1],[13,975,977,999,1012,1],[14,937,937,981,1014,1],[15,914,937,942,961,0],[16,909,931,942,958,1],[17,878,907,929,958,1],[18,902,907,939,954,0],[19,934,941,971,987,0],[20,867,886,967,972,1],[21,842,884,931,939,0],[22,828,847,931,960,1],[23,757,771,845,866,1],[24,658,701,773,782,1],[25,641,664,703,716,1],[26,613,649,662,694,1],[27,633,650,651,691,0],[28,607,658,659,709,1],[29,656,659,684,725,0],[30,666,684,698,721,0],[31,674,696,698,724,1],[32,658,672,696,705,1],[33,644,670,678,708,0],[34,644,672,676,694,1],[35,668,670,710,723,0],[36,683,697,710,716,1],[37,662,691,695,700,1],[38,611,624,691,693,1],[39,620,622,684,704,0],[40,663,684,695,727,0],[41,672,693,696,729,0],[42,662,693,694,731,0],[43,691,692,740,743,0],[44,703,740,746,776,0],[45,747,748,772,813,0],[46,704,710,784,803,1],[47,669,679,707,718,1],[48,679,682,696,703,0],[49,672,679,693,701,1],[50,660,664,717,742,0],[51,715,721,742,753,0],[52,697,717,746,750,1],[53,721,721,731,753,0],[54,700,729,736,771,0],[55,734,734,738,782,1],[56,683,685,732,741,1],[57,597,603,687,702,1],[58,495,570,605,605,1],[59,552,572,580,596,0],[60,553,553,578,583,1],[61,534,535,551,569,1],[62,501,512,541,548,1],[63,507,510,512,525,0],[64,509,510,551,551,0],[65,542,549,558,566,0],[66,555,560,578,580,0],[67,559,568,580,580,1],[68,542,556,566,566,1],[69,513,513,556,556,1],[70,505,515,521,521,0],[71,518,521,523,530,1],[72,508,509,519,522,1],[73,510,513,518,529,0],[74,506,509,519,524,1],[75,495,497,513,524,1],[76,494,495,499,512,1],[77,494,494,511,512,0],[78,514,517,531,534,0],[79,524,532,540,548,0],[80,536,540,544,557,1],[81,536,536,597,632,0],[82,547,556,599,610,1],[83,561,570,579,601,0],[84,555,577,622,640,0],[85,457,457,614,627,1],[86,378,455,502,502,0],[87,445,466,502,513,1]];
/* 2-minute session, chart units: x and y are scaled when drawn */
const M2 = [[639,738,748,838,953,0],[651,795,795,940,996,0],[663,868,868,935,980,0],[675,838,905,908,950,0],[687,906,908,935,950,0],[700,921,937,962,985,0],[711,933,943,960,980,0],[723,905,926,948,950,1],[735,898,925,935,936,1],[747,817,878,930,935,1],[758,855,855,905,905,1],[771,817,874,880,895,1],[783,831,855,874,880,1],[795,780,821,850,852,1],[807,772,790,838,838,1],[819,795,811,827,880,0],[831,795,822,835,842,0],[843,826,826,850,874,0],[855,855,855,873,912,0],[867,800,850,863,907,1],[879,785,812,858,870,1],[891,800,835,840,878,0],[904,785,834,838,852,1],[915,785,828,832,878,1],[927,832,832,855,864,0],[940,846,846,874,938,0],[951,867,873,910,933,0],[963,900,900,920,970,0],[976,920,920,960,1017,0],[987,905,951,962,992,0],[999,800,900,955,993,1],[1011,711,868,928,930,1],[1023,800,837,862,900,1],[1037,583,737,850,883,1],[1047,575,613,795,795,1],[1060,548,617,702,702,1],[1072,590,604,652,658,1],[1083,495,563,628,642,1],[1095,415,490,594,594,1],[1107,363,432,545,545,1],[1119,314,362,488,488,1],[1131,320,370,425,425,1],[1144,377,397,402,438,0],[1155,398,400,484,566,0],[1167,441,441,612,654,0],[1180,503,526,588,680,0],[1191,502,533,555,572,1],[1203,497,530,546,567,1],[1216,507,532,540,558,1]];
const units = (pts, x0, y0, kx, ky) => pts.map(([x, y]) => [Math.round(x0 + x * kx), Math.round(y0 + y * ky)]);

const MARS = [[1922,385],[1928,430],[1938,375],[1945,405],[1955,405],[1962,375],[1975,380],[1985,380],[2000,365],[2015,365],[2021,340],[2027,385],[2034,365],[2042,395],[2050,380],[2055,410],[2059,395],[2064,310],[2072,250],[2080,250],[2085,255],[2092,250],[2100,240],[2106,265],[2111,320],[2117,355],[2125,310],[2134,290],[2140,340],[2150,315],[2162,320],[2172,330],[2178,360],[2185,345],[2195,358],[2205,330],[2212,300],[2220,270],[2225,250],[2228,380],[2234,300],[2245,290],[2255,275],[2265,280],[2275,283],[2287,290],[2293,300],[2300,345],[2310,355],[2320,345],[2330,355],[2343,380],[2350,345],[2362,340],[2375,350],[2385,365],[2392,355],[2400,390],[2408,365],[2413,390],[2420,440],[2428,440],[2437,490],[2445,465],[2457,448],[2470,443],[2476,460],[2486,440],[2494,490],[2503,480],[2512,475],[2518,450],[2525,475],[2535,475],[2544,480],[2550,525],[2557,500],[2567,505],[2575,475],[2583,500],[2592,535],[2597,510],[2607,480],[2618,480],[2630,475],[2640,480],[2650,455],[2665,450],[2673,490],[2682,450],[2690,430],[2700,440],[2708,415],[2720,430],[2727,475],[2740,475],[2750,470],[2762,475],[2768,425],[2780,460],[2792,475],[2805,455],[2812,420],[2822,425],[2835,440],[2845,420],[2855,450],[2862,420],[2868,375],[2874,375],[2877,260],[2881,200],[2884,280],[2887,340],[2894,380],[2900,350],[2915,345],[2930,343],[2940,335],[2948,360],[2962,410],[2972,385],[2985,345],[2992,325],[2997,400],[3010,375],[3015,360],[3022,395],[3035,388],[3045,465],[3052,490],[3058,470],[3063,475],[3067,560],[3071,700],[3078,650],[3090,680],[3100,710],[3110,680],[3115,665],[3123,690],[3133,670],[3139,740],[3148,810],[3156,730],[3165,775],[3178,800],[3185,750],[3195,730],[3210,745],[3220,750],[3228,700],[3240,710],[3255,735],[3265,745],[3278,785],[3290,735],[3299,745],[3301,830],[3306,880],[3310,920],[3318,830],[3325,750],[3335,765],[3345,760],[3350,800],[3360,760],[3370,740],[3380,750],[3387,710],[3400,715],[3412,715],[3417,750],[3425,710],[3440,705],[3446,645],[3460,650],[3470,660],[3480,655],[3483,610],[3495,605],[3505,620],[3510,600],[3512,590]];
const S30A = [[2,1760],[8,1795],[16,1812],[26,1800],[40,1780],[56,1785],[68,1800],[80,1825],[92,1850],[104,1862],[114,1825],[126,1800],[140,1795],[154,1805],[164,1850],[176,1850],[190,1855],[208,1885],[220,1870],[234,1800],[246,1775],[262,1775],[276,1768],[290,1765],[304,1750],[307,1500]];
const S30B = [[310,1470],[313,1520],[320,1585],[325,1530],[335,1540],[343,1575],[350,1600],[357,1612],[365,1590],[374,1550],[382,1575],[390,1590],[400,1570],[410,1572],[425,1535],[433,1565],[441,1520],[452,1535],[462,1475],[472,1480],[480,1485],[492,1500],[503,1480],[510,1490],[518,1515],[530,1535],[545,1545],[560,1560],[572,1555],[585,1590],[595,1562],[610,1570],[625,1535],[636,1550],[642,1510],[650,1515],[658,1480],[670,1475],[685,1512],[700,1497],[712,1482],[722,1495],[732,1498],[745,1490],[755,1495],[762,1480],[772,1495],[790,1468],[800,1482],[812,1475],[820,1465],[832,1478],[845,1470],[855,1475],[865,1495],[875,1520],[885,1498],[892,1515],[900,1510],[910,1540],[920,1530],[935,1540],[948,1550],[953,1540],[956,1620],[960,1675],[963,1650],[968,1655],[975,1620],[982,1655],[990,1670],[997,1655],[1003,1630],[1008,1590],[1016,1615],[1025,1585],[1033,1575],[1040,1560],[1043,1600],[1050,1590],[1060,1625],[1070,1580],[1082,1605],[1086,1570],[1095,1610],[1105,1640],[1113,1655],[1120,1685],[1125,1640],[1130,1670],[1133,1590],[1137,1535],[1141,1600],[1144,1620],[1148,1500],[1153,1480],[1157,1470],[1165,1475],[1170,1430],[1175,1425],[1180,1385],[1186,1340],[1190,1310],[1194,1315],[1198,1355],[1203,1380],[1207,1440],[1214,1490],[1220,1420],[1227,1430],[1232,1430]];
const M2A = [[1924,2005],[1938,2018],[1950,1990],[1965,1960],[1985,1965],[2000,1940],[2020,1950],[2040,1925],[2060,1915],[2075,1900],[2080,1560],[2095,1600],[2110,1660],[2125,1640],[2140,1650],[2155,1640],[2175,1655],[2190,1625],[2220,1605],[2250,1600],[2280,1590],[2310,1560],[2335,1530],[2370,1530],[2400,1535],[2430,1540],[2460,1555],[2490,1560],[2520,1590],[2550,1610],[2575,1635],[2600,1615],[2625,1620],[2650,1590],[2680,1560],[2710,1530],[2740,1540],[2770,1530],[2800,1535],[2840,1525],[2880,1545],[2895,1540],[2915,1540],[2935,1528],[2960,1540],[2980,1515],[3000,1512],[3020,1520],[3060,1510],[3090,1518],[3120,1540],[3140,1555],[3160,1548],[3180,1560],[3200,1585],[3220,1585],[3250,1595],[3265,1592]];

const CHARTS = {
  h4: {
    box: [2, 147, 881, 905],
    svg: () => crisp(
      line(2, 205, 883, 205, '#a0521c') + candles(H4, 7, 9.04, 5, '#5cc8f0', '#f57a14') +
      line(2, 572, 883, 572, '#8b4a18', 1, '1 1') + line(2, 608, 883, 608, '#e00000') + line(2, 618, 883, 618, '#fff') +
      line(82, 648, 883, 648, '#f00', 1, '2 1') + [659, 723, 786].map(y => line(2, y, 883, y, '#8b4a18', 1, '1 1')).join('') +
      line(2, 827, 883, 827, '#0055ff', 2, '2 2') + line(2, 940, 883, 940, '#a0521c') + line(2, 973, 883, 973, '#0055ff', 2, '2 2') +
      zone(2, 206, 502, 272, '#00bfff', .22, '#00bfff', '5 4') + zone(331, 342, 884, 440, '#0055ff', .24, '#0055ff', '6 5') + zone(2, 1022, 884, 1053, '#0055ff', .24, '#0055ff', '6 5') +
      line(2, 211, 883, 211, '#0055ff', 2) +
      ticks(277, 332, 208, '#e8e800', 3) + ticks(277, 332, 262, '#c8e030', 4) + ticks(277, 386, 346, '#f0e000', 4) + ticks(331, 501, 682, '#ffee00', 4) +
      ticks(475, 486, 809, '#ffee00', 4) + ticks(466, 477, 823, '#ffee00', 4) + ticks(466, 477, 833, '#ffee00', 4) + ticks(457, 468, 836, '#ffee00', 4)) +
      line(2, 365, 106, 474, '#ffa500', 2) + home(691, 147),
    labels: [[5, 196, '(0,00 %)', 'fib'], [5, 203, '(0,00 %)', 'fib--blue'], [5, 560, '(50,00 %)', 'fib'], [5, 649, '(61,80 %)', 'fib'], [2, 649, '54,45 / 0,39 %', 'ink-red'], [5, 714, '(70,50 %)', 'fib'], [5, 777, '(79,00 %)', 'fib'], [5, 818, '(50,00 %)', 'fib--blue'], [5, 931, '(100,00 %)', 'fib'], [5, 964, '(61,80 %)', 'fib--blue'], [20, 1034, '4 heures', 'ghost'], [545, 533, 'Dax40 Déc', 'note note--dark']],
    times: [[236, '11 déc.'], [515, '18 déc.'], [848, '25 déc.']],
    prices: [[202, '14 677,34', 'tag brown'], [210, '14 669,00', 'tag azure'], [263, '14 600,00'], [412, '14 400,00'], [561, '14 200,00'], [711, '14 000,00'], [861, '13 800,00'], [1011, '13 600,00'], [571, '14 186,11', 'tag brown'], [619, '14 125,90', 'tag white'], [607, '14 139,12', 'now'], [659, '14 070,22', 'tag brown'], [647, '14 084,67', 'full alert'], [722, '13 984,76', 'tag brown'], [785, '13 901,28', 'tag brown'], [826, '13 846,03', 'tag azure'], [939, '13 695,02', 'tag brown'], [972, '13 651,81', 'tag azure']]
  },
  m15: {
    box: [962, 147, 881, 905],
    svg: () => crisp(line(962, 280, 1843, 280, '#8b4a18', 1, '1 1') + candles(M15, 967, 8.24, 5, '#5cc8f0', '#f57a14') +
      line(962, 465, 1843, 465, '#e00000') + line(962, 517, 1843, 517, '#fff') + line(1043, 678, 1843, 678, '#f00', 1, '2 1') + line(962, 735, 1843, 735, '#8b4a18', 1, '2 1')) + home(1692, 147),
    labels: [[965, 271, '(50,00 %)', 'fib'], [962, 680, '54,45 / 0,39 %', 'ink-red'], [965, 726, '(61,80 %)', 'fib'], [980, 1034, '15 minutes', 'ghost']],
    times: [[1034, '12:00'], [1100, '14:00'], [1166, '16:00'], [1232, '18:00'], [1298, '20:00'], [1364, '22:00'], [1429, '01:15'], [1487, '03:00'], [1553, '05:00'], [1619, '07:00'], [1685, '09:00'], [1751, '11:00'], [1784, '12:00']],
    prices: [[149, '14 220,00'], [265, '14 190,00'], [279, '14 186,11', 'tag brown'], [383, '14 160,00'], [465, '14 139,12', 'now'], [501, '14 130,00'], [516, '14 125,90', 'tag white'], [618, '14 100,00'], [677, '14 084,67', 'full alert'], [735, '14 070,22', 'tag brown'], [854, '14 040,00'], [971, '14 010,00'], [1040, '13 992,08', 'box']]
  },
  s30: {
    box: [2, 1202, 1509, 720],
    svg: () => crisp(
      dense(S30A, 2, 9, 77, 1) + line(307, 1495, 307, 1770, '#12aab8') + line(309, 1460, 309, 1525, '#111') + dense(S30B, 2, 10, 991, 1) +
      zone(1, 1201, 1512, 1300, '#0055ff', .18, '#0055ff') + zone(228, 1458, 1053, 1473, '#ff0000', .18, '#e00000') +
      zone(277, 1590, 947, 1616, '#00a000', .18, '#008000') + zone(267, 1692, 1351, 1707, '#ffa500', .2, '#ffa500') +
      zone(267, 1707, 1512, 1770, '#0055ff', .18, '#0055ff') + zone(206, 1870, 1512, 1896, '#0055ff', .18, '#0055ff') + zone(1, 1900, 183, 1923, '#0055ff', .18, '#0055ff', '4 3') +
      line(2, 1430, 1511, 1430, '#f00') +
      ticks(277, 335, 1460, '#e0a000', 4) + ticks(449, 518, 1470, '#e0a000', 4) + ticks(778, 856, 1463, '#e0a000', 4) + ticks(566, 612, 1589, '#c8c800', 4) + ticks(344, 398, 1614, '#b4b400', 4) +
      ticks(1128, 1278, 1302, '#d8c800', 3) + ticks(1158, 1243, 1356, '#d8c800', 3) + ticks(1232, 1502, 1461, '#d8c800', 3) + ticks(963, 1005, 1677, '#d8c800', 3) + ticks(1103, 1165, 1691, '#d8c800', 3)) +
      line(329, 1622, 936, 1549, '#ffa500', 2) + home(1236, 1201),
    labels: [[820, 1265, 'DEMAND ZONE\n\nACCUMULATION\nPS\nSC\nAR\nST\nST-B\nSPRING\nBOS\nTest', 'note note--list']],
    times: [[174, '01:15'], [286, '02:00'], [441, '03:00'], [551, '04:00'], [655, '05:02'], [734, '06:00'], [842, '07:00'], [974, '08:00'], [1146, '09:00'], [1319, '10:00'], [1450, '22 déc. 2022 11:38:00', 'stamp']],
    prices: [[1314, '14 160,00'], [1429, '14 140,62', 'now ok'], [1551, '14 120,00'], [1669, '14 099,94', 'full cursor'], [1789, '14 080,00'], [1908, '14 060,00']]
  },
  mars: {
    box: [1921, 123, 1845, 889],
    svg: () => crisp(dense(MARS, 1.5, 17, 4242, 1) + line(2881, 195, 2881, 330, '#ee9714') + line(2228, 415, 2228, 300, '#ee9714') +
      zone(3036, 677, 3407, 825, '#999', .12, '#888', '6 4') + line(1990, 633, 3766, 633, '#f33', 1, '2 1') + line(1921, 601, 3766, 601, '#e00000') +
      ticks(2492, 3583, 540, '#d8c800', 4) + ticks(3241, 3375, 715, '#d8c800', 4) + ticks(3290, 3362, 737, '#d8c800', 4)) +
      line(3391, 896, 3473, 565, '#ffa500', 2) + line(3225, 697, 3354, 776, '#ffa500', 2) +
      '<ellipse cx="3309" cy="873" rx="34" ry="78" fill="#f00" fill-opacity=".2" stroke="#f01010" stroke-width="1.500"/>' +
      poly('3310,924 3324,802 3327,855 3341,753 3348,813 3378,720', '#f00', 2) +
      '<path d="M3417 829l8-17l-4-2l15-8l1 17l-4-2l-8 16z" fill="#f00"/>' + home(3512, 123),
    labels: [[1921, 634, '45,8 / 0,32 %', 'ink-red'], [3241, 719, 'Dax40  - Mars', 'note'], [3320, 795, '1', 'ink-red'], [3323, 862, '2', 'ink-red'], [3337, 745, '3', 'ink-red'], [3374, 712, '5', 'ink-red']],
    times: [[2277, '5 déc.'], [2747, '12 déc.'], [3212, '19 déc.']],
    prices: [[163, '14 800,00'], [310, '14 600,00'], [457, '14 400,00'], [599, '14 205,5', 'now'], [633, '14 159,9', 'full alert'], [751, '14 000,00'], [898, '13 800,00']]
  },
  m2: {
    box: [1921, 1203, 1845, 889],
    svg: () => crisp(
      [1279, 1386, 1568, 1856, 1963].map(y => line(3491, y, 3766, y, '#555')).join('') + line(3491, 1675, 3766, 1675, '#f6f', 2) +
      line(1921, 1297, 3345, 1297, '#a0521c') + line(1921, 1357, 3766, 1357, '#008000', 2) + line(1921, 1462, 3766, 1462, '#f01000') +
      [1489, 1607, 1702, 1798, 1934].map(y => line(1921, y, 3344, y, '#a0521c', 1, '2 1')).join('') +
      line(1921, 1509, 3766, 1509, '#f0f', 3, '6 4') + line(1921, 1727, 3766, 1727, '#0f0', 4, '2 1') + line(1921, 2025, 3766, 2025, '#f0f', 3, '2 1') +
      dense(M2A, 7, 18, 31, 1, 1) + line(2078, 1500, 2078, 1880, '#12aab8') +
      candles(M2, 2880, .6122, 4, '#12aab8', '#ee9714', .6901, 1080)) +
      line(1922, 1842, 3343, 1297, '#222') + '<circle cx="3344" cy="1297" r="5" fill="none" stroke="#222"/>' +
      poly('1960,2000 2000,1960 2040,1900 2080,1830 2110,1790 2160,1750 2220,1700 2280,1660 2340,1610 2400,1580 2480,1575 2560,1590 2640,1605 2720,1580 2800,1560 2880,1547 ' + units([[60,672],[130,668],[180,658],[240,653],[300,646],[350,642],[400,648],[470,660],[540,682],[600,697],[627,705],[660,740],[700,775],[735,800],[790,807],[820,808],[855,822],[910,820],[940,828],[990,858],[1022,856],[1060,812],[1100,765],[1140,690],[1170,678],[1200,657],[1216,648]], 2880, 1080, .6122, .6901).join(' '), '#222') +
      poly('1940,2000 1980,1950 2020,1920 2060,1880 2090,1790 2120,1730 2160,1700 2220,1660 2280,1620 2340,1570 2400,1545 2460,1550 2520,1575 2580,1610 2640,1600 2700,1560 2760,1545 2820,1535 2880,1533 ' + units([[60,662],[90,655],[130,658],[180,638],[240,637],[300,630],[350,632],[400,652],[470,672],[520,702],[600,734],[627,738],[660,800],[700,858],[735,885],[780,870],[810,848],[855,853],[910,841],[930,848],[960,880],[990,905],[1023,877],[1070,760],[1110,640],[1140,546],[1155,548],[1168,562],[1190,555],[1216,550]], 2880, 1080, .6122, .6901).join(' '), '#f00', 2, '5 3') + home(3631, 1202),
    labels: [[1924, 1289, '(0,00 %)', 'fib'], [1924, 1480, '(23,60 %)', 'fib'], [1924, 1598, '(38,20 %)', 'fib'], [1924, 1693, '(50,00 %)', 'fib'], [1924, 1789, '(61,80 %)', 'fib'], [1924, 1925, '(78,60 %)', 'fib'],
      [3346, 1297, '14 162,34', 'mark brown'], [3346, 1488, '14 136,37', 'mark brown'], [3346, 1606, '14 120,30', 'mark brown'], [3346, 1701, '14 107,32', 'mark brown'], [3346, 1797, '14 094,34', 'mark brown'], [3346, 1933, '14 075,85', 'mark brown'], [2994, 1592, 'Dax40 Déc', 'note']],
    times: [[2062, '02:00'], [2269, '03:00'], [2480, '04:00'], [2678, '05:02'], [2866, '06:00'], [3076, '07:00'], [3289, '08:00'], [3509, '09:00']],
    prices: [[1315, '14 160,00'], [1357, '14 154,27', 'tag green'], [1460, '14 140,12', 'now'], [1507, '14 133,74', 'tag pink'], [1609, '14 120,00'], [1726, '14 103,97', 'tag lime'], [1756, '14 100,00'], [1791, '14 095,06', 'full cursor'], [1903, '14 080,00'], [2023, '14 063,47', 'tag pink'], [2050, '14 060,00']],
    tip: 'Fibonacci 14 094,335 (61,80 %), 14 094,34\nDébut : 2022 1221 21:20:00\nFin : 2022 1222 08:20:00'
  }
};

document.querySelectorAll('[data-chart]').forEach(el => {
  const c = CHARTS[el.dataset.chart], [X, Y, W, H] = c.box;
  const px = x => ((x - X) / W * 100).toFixed(3), py = y => ((y - Y) / H * 100).toFixed(3);
  const side = parseFloat(getComputedStyle(el).gridTemplateColumns.split(' ')[1]);
  const full = W + side;
  el.innerHTML =
    `<div class="chart__times">${c.times.map(([x, t, k = '']) => `<span class="${k}" style="left:${((x - X) / full * 100).toFixed(3)}%">${t}</span>`).join('')}</div>` +
    `<div class="chart__plot"><svg viewBox="${X} ${Y} ${W} ${H}" preserveAspectRatio="none">${c.svg()}</svg>${c.labels.map(([x, y, t, k]) => `<span class="${k}" style="left:${px(x)}%;top:${py(y)}%">${t}</span>`).join('')}</div>` +
    `<div class="chart__prices">${c.prices.map(([y, t, k = '']) => `<span class="${k}" style="top:${py(y)}%">${t}</span>`).join('')}</div>`;
  if (c.tip) {
    el.classList.add('chart--tip');
    el.insertAdjacentHTML('beforeend', `<div class="tip-out">${c.tip}</div>`);
  }
});
```
